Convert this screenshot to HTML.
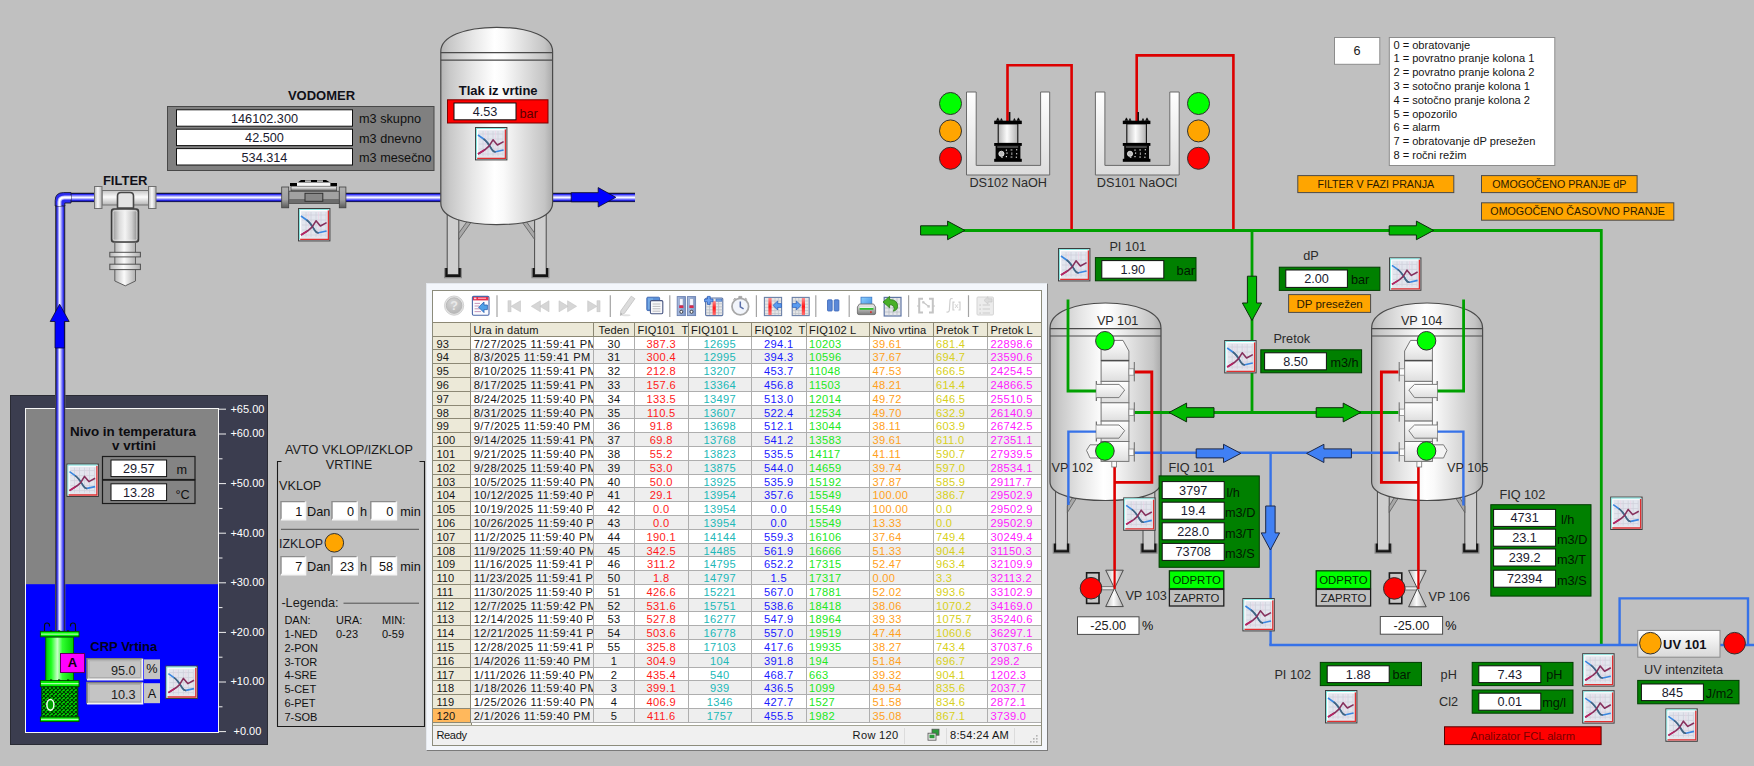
<!DOCTYPE html>
<html><head><meta charset="utf-8"><title>SCADA</title>
<style>
html,body{margin:0;padding:0;}
body{width:1754px;height:766px;overflow:hidden;background:#c0c0c0;position:relative;font-family:"Liberation Sans",sans-serif;}
svg#main{position:absolute;left:0;top:0;}
svg text{font-family:"Liberation Sans",sans-serif;}
#win{position:absolute;left:426px;top:283px;width:622px;height:468px;background:#f3f6fb;box-sizing:border-box;border-right:1px solid #7a7a7a;border-bottom:1px solid #7a7a7a;border-left:1px solid #e4e8ee;border-top:1px solid #e4e8ee;}
#inner{position:absolute;left:5px;top:6px;width:608px;height:454px;background:#fff;border:1px solid #8c8c7c;box-sizing:content-box;overflow:hidden;}
#tb{position:absolute;left:0;top:0;width:609px;height:30.4px;background:#fff;}
.grid{position:absolute;left:0;top:30.8px;width:609px;height:403px;background:#fff;font-size:11.1px;overflow:hidden;border-top:1px solid #8c8874;}
.cl{position:absolute;box-sizing:border-box;border-right:1px solid #aeaeae;border-bottom:1px solid #aeaeae;white-space:nowrap;overflow:hidden;line-height:14.4px;padding:0 2px 0 3px;color:#161616;background:#fff;letter-spacing:0.3px;}
.hd{background:#ece9d8;border-color:#8c8874;color:#161616;letter-spacing:0.12px;line-height:14.4px;padding-left:2.6px;}
.hd i{display:inline-block;width:3px;}
.hc{text-align:center;padding:0;}
.rn{background:#ece9d8;border-color:#8c8874;letter-spacing:0.1px;padding-left:3.4px;}
.alt{background:#eeeeee;}
.dt{padding-left:2.7px;letter-spacing:0.43px;}
.c{text-align:center;padding:0;}
.l{text-align:left;padding-left:2.5px;}
.k{color:#161616;} .r{color:#ff1a1a;} .cy{color:#20b8b8;} .b{color:#1a1aff;} .g{color:#20e820;} .o{color:#ffa020;} .y{color:#d8d020;} .m{color:#ff20ff;}
.sel{background:#ffb85c;}
#sb{position:absolute;left:0;top:434px;width:609px;height:20px;background:#f0f0f0;border-top:1px solid #a4a494;font-size:11.1px;color:#161616;letter-spacing:0.3px;}
#sb span{position:absolute;top:1.8px;white-space:nowrap;line-height:14.9px;}
</style></head><body>
<svg id="main" width="1754" height="766" viewBox="0 0 1754 766">
<defs>
<linearGradient id="pipeH" x1="0" y1="0" x2="0" y2="1">
 <stop offset="0" stop-color="#6a6a6a"/><stop offset="0.07" stop-color="#101010"/><stop offset="0.13" stop-color="#141480"/><stop offset="0.2" stop-color="#3030f4"/>
 <stop offset="0.34" stop-color="#9c9cff"/><stop offset="0.5" stop-color="#f6f6ff"/><stop offset="0.64" stop-color="#a0a0ff"/><stop offset="0.77" stop-color="#3434ff"/>
 <stop offset="0.87" stop-color="#000078"/><stop offset="0.93" stop-color="#2c2c40"/><stop offset="1" stop-color="#a0a0a0"/>
</linearGradient>
<linearGradient id="pipeV" x1="0" y1="0" x2="1" y2="0">
 <stop offset="0" stop-color="#707070"/><stop offset="0.07" stop-color="#303030"/><stop offset="0.13" stop-color="#202098"/><stop offset="0.21" stop-color="#3434dc"/>
 <stop offset="0.32" stop-color="#9494ff"/><stop offset="0.45" stop-color="#fcfcff"/><stop offset="0.58" stop-color="#b0b0ff"/><stop offset="0.71" stop-color="#6464ff"/>
 <stop offset="0.81" stop-color="#3232e4"/><stop offset="0.88" stop-color="#2020a0"/><stop offset="0.93" stop-color="#2c2c2c"/><stop offset="1" stop-color="#6a6a6a"/>
</linearGradient>
<linearGradient id="tankG" x1="0" y1="0" x2="1" y2="0">
 <stop offset="0" stop-color="#b4b4b4"/><stop offset="0.08" stop-color="#c8c8c8"/><stop offset="0.28" stop-color="#e6e6e6"/>
 <stop offset="0.48" stop-color="#ffffff"/><stop offset="0.56" stop-color="#fafafa"/><stop offset="0.75" stop-color="#dedede"/><stop offset="0.93" stop-color="#c4c4c4"/><stop offset="1" stop-color="#aaaaaa"/>
</linearGradient>
<linearGradient id="metalH" x1="0" y1="0" x2="1" y2="0">
 <stop offset="0" stop-color="#b8b8b8"/><stop offset="0.45" stop-color="#fbfbfb"/><stop offset="1" stop-color="#b0b0b0"/>
</linearGradient>
<linearGradient id="filtG" x1="0" y1="0" x2="1" y2="0"><stop offset="0" stop-color="#8e8e8e"/><stop offset="0.3" stop-color="#dcdcdc"/><stop offset="0.5" stop-color="#f4f4f4"/><stop offset="0.75" stop-color="#cfcfcf"/><stop offset="1" stop-color="#808080"/></linearGradient>
<linearGradient id="metalV" x1="0" y1="0" x2="0" y2="1">
 <stop offset="0" stop-color="#c4c4c4"/><stop offset="0.45" stop-color="#fbfbfb"/><stop offset="1" stop-color="#b4b4b4"/>
</linearGradient>
<linearGradient id="segV" x1="0" y1="0" x2="0" y2="1">
 <stop offset="0" stop-color="#ffffff"/><stop offset="1" stop-color="#dedede"/>
</linearGradient>
<linearGradient id="uWall" x1="0" y1="0" x2="0" y2="1">
 <stop offset="0" stop-color="#ffffff"/><stop offset="1" stop-color="#dcdcdc"/>
</linearGradient>
<linearGradient id="pumpG" x1="0" y1="0" x2="1" y2="0">
 <stop offset="0" stop-color="#00c800"/><stop offset="0.2" stop-color="#20ff20"/><stop offset="0.42" stop-color="#c8ffc8"/>
 <stop offset="0.6" stop-color="#30ff30"/><stop offset="1" stop-color="#00d000"/>
</linearGradient>
<linearGradient id="uvG" x1="0" y1="0" x2="0" y2="1">
 <stop offset="0" stop-color="#ffffff"/><stop offset="1" stop-color="#d8d8d8"/>
</linearGradient>
<pattern id="mesh" width="4" height="4" patternUnits="userSpaceOnUse">
 <rect width="4" height="4" fill="#00d800"/><path d="M0,0 L4,4 M4,0 L0,4" stroke="#003000" stroke-width="1.05"/>
</pattern>
<symbol id="chart" width="33" height="34" viewBox="0 0 33 34" overflow="visible">
 <rect x="0.5" y="0.5" width="31.4" height="32.4" fill="#e3e6ee" stroke="#3c3c3c" stroke-width="1"/>
 <path d="M1.5,31.6 V1.5 H30.6" fill="none" stroke="#86e8e2" stroke-width="1.1"/>
 <path d="M2.6,30.6 V2.6 H29.6" fill="none" stroke="#ffffff" stroke-width="1.1"/>
 <g stroke="#cfd0dc" stroke-width="0.8"><path d="M4,7 H28 M4,12 H28 M4,17 H28 M4,22 H28 M4,27 H28 M8,4 V29 M13,4 V29 M18,4 V29 M23,4 V29 M28,4 V29"/></g>
 <g stroke="#f0d0e4" stroke-width="0.7" opacity="0.8"><path d="M10.5,4 V29 M20.5,4 V29"/></g>
 <path d="M30.4,2.4 V31.4 H2.2" fill="none" stroke="#e03030" stroke-width="1.3"/>
 <path d="M3,8 L8.6,12 C12.4,14.6 14.4,18.4 17,22.6 C18,24.4 19,25 20.6,24.8 L28.6,23" fill="none" stroke="#3a86e0" stroke-width="1.6" stroke-linejoin="round"/>
 <path d="M8.6,12 C12.4,14.6 14.4,18.4 17,22.6 C18,24.4 19,25 20.6,24.8" fill="none" stroke="#46647a" stroke-width="1.6"/>
 <path d="M3,27 L10.6,22.2 L14,19.2 L18,12.8 L22.4,18 L28.6,14.6" fill="none" stroke="#86305c" stroke-width="1.6" stroke-linejoin="round"/>
 <path d="M3,27 L9,23.2" fill="none" stroke="#b82464" stroke-width="1.6"/>
</symbol>
</defs>
<rect x="55" y="205" width="10.4" height="426" fill="url(#pipeV)"/>
<rect x="70" y="192.5" width="565" height="10" fill="url(#pipeH)"/>
<path d="M55.2,206 V200.5 Q55.2,192.6 63.5,192.6 H71 V203 H64.8 V206 Z" fill="#2c2cf0" stroke="#1a1a30" stroke-width="0.9"/>
<path d="M59.4,206 V202 Q59.4,197.5 64.5,197.5 H71" fill="none" stroke="#b4b4ff" stroke-width="4"/>
<path d="M59.4,206 V202 Q59.4,197.5 64.5,197.5 H71" fill="none" stroke="#ffffff" stroke-width="1.8"/>
<path d="M59.6,304.2 L69.2,321.5 L64.4,321.5 L64.4,348 L55,348 L55,321.5 L50.2,321.5 Z" fill="#0000ff" stroke="#0a0a28" stroke-width="0.8"/>
<path d="M571.2,192.7 L598.2,192.7 L598.2,187.6 L615.8,197.3 L598.2,207 L598.2,201.8 L571.2,201.8 Z" fill="#0000ff" stroke="#0a0a28" stroke-width="0.8"/>
<rect x="102" y="190.5" width="46.5" height="14.5" fill="url(#metalV)" stroke="#707070" stroke-width="1"/>
<rect x="94.5" y="186.5" width="7.5" height="22" fill="url(#metalH)" stroke="#707070" stroke-width="1"/>
<rect x="148.5" y="186.5" width="7.5" height="22" fill="url(#metalH)" stroke="#707070" stroke-width="1"/>
<path d="M117.5,208 L117.5,196 Q117.5,192.5 121,192.5 L130,192.5 Q133.5,192.5 133.5,196 L133.5,208 Z" fill="#e4e4e4" stroke="#484848" stroke-width="1.6"/>
<rect x="111.5" y="209" width="27" height="33" rx="2.5" fill="url(#filtG)" stroke="#3c3c3c" stroke-width="1.5"/>
<rect x="113.2" y="210.8" width="23.6" height="29.4" rx="1.6" fill="none" stroke="#f0f0f0" stroke-width="0.8" opacity="0.8"/>
<path d="M114.8,242.5 L135.5,242.5 L135.5,281 L125.3,285.8 L114.8,281 Z" fill="url(#metalH)" stroke="#606060" stroke-width="1"/>
<rect x="109.8" y="252.3" width="30.6" height="4.6" fill="url(#metalH)" stroke="#505050" stroke-width="1"/>
<rect x="109.8" y="264.2" width="30.6" height="5.4" fill="url(#metalH)" stroke="#505050" stroke-width="1"/>
<text x="125.2" y="184.8" font-size="13" font-weight="bold" fill="#101018" text-anchor="middle" >FILTER</text>
<text x="321.5" y="100.4" font-size="13" font-weight="bold" fill="#101018" text-anchor="middle" >VODOMER</text>
<rect x="167.5" y="106.5" width="266.5" height="64" fill="#808080" stroke="#484848" stroke-width="1"/>
<rect x="176.5" y="109.8" width="176" height="16.4" fill="#fff" stroke="#101010" stroke-width="1"/>
<text x="264.5" y="122.8" font-size="12.7" font-weight="normal" fill="#1a1a2e" text-anchor="middle" >146102.300</text>
<text x="359" y="123.39999999999999" font-size="12.7" font-weight="normal" fill="#101010" text-anchor="start" >m3 skupno</text>
<rect x="176.5" y="129.2" width="176" height="16.4" fill="#fff" stroke="#101010" stroke-width="1"/>
<text x="264.5" y="142.2" font-size="12.7" font-weight="normal" fill="#1a1a2e" text-anchor="middle" >42.500</text>
<text x="359" y="142.79999999999998" font-size="12.7" font-weight="normal" fill="#101010" text-anchor="start" >m3 dnevno</text>
<rect x="176.5" y="148.6" width="176" height="16.4" fill="#fff" stroke="#101010" stroke-width="1"/>
<text x="264.5" y="161.6" font-size="12.7" font-weight="normal" fill="#1a1a2e" text-anchor="middle" >534.314</text>
<text x="359" y="162.2" font-size="12.7" font-weight="normal" fill="#101010" text-anchor="start" >m3 mesečno</text>
<path d="M290,186 L290,183 L297,183 L301,180 L326,180 L331,183 L337,183 L337,186 Z" fill="#000"/>
<rect x="297" y="182.4" width="33.4" height="3.8" fill="#f6f6f6"/>
<rect x="305" y="180.4" width="6" height="1.4" fill="#ddd"/><rect x="317" y="180.4" width="6" height="1.4" fill="#ddd"/>
<linearGradient id="fmTop" x1="0" y1="0" x2="0" y2="1"><stop offset="0" stop-color="#fff"/><stop offset="0.5" stop-color="#bbb"/><stop offset="1" stop-color="#3a3a3a"/></linearGradient>
<rect x="291" y="186.2" width="45.6" height="5.2" fill="url(#fmTop)" stroke="#303030" stroke-width="0.6"/>
<rect x="288.8" y="191.2" width="50.5" height="12.4" fill="#a2a2a2" stroke="#404040" stroke-width="0.8"/>
<rect x="288.8" y="199" width="50.5" height="4.2" fill="#6c6c6c"/>
<rect x="305" y="193.3" width="17.8" height="8" fill="#888" stroke="#303030" stroke-width="1"/>
<linearGradient id="fmFl" x1="0" y1="0" x2="0" y2="1"><stop offset="0" stop-color="#b0b0b0"/><stop offset="0.6" stop-color="#a0a0a0"/><stop offset="1" stop-color="#5a5a5a"/></linearGradient>
<rect x="281.7" y="187" width="7" height="20.8" fill="url(#fmFl)" stroke="#404040" stroke-width="0.8"/>
<rect x="339.3" y="187" width="6.6" height="20.8" fill="url(#fmFl)" stroke="#404040" stroke-width="0.8"/>
<use href="#chart" x="298" y="208"/>
<rect x="447.2" y="199" width="11.6" height="75.60000000000002" fill="#cecece" stroke="#4a4a4a" stroke-width="1"/>
<path d="M444.6,268 V277.6 H461.40000000000003 V268" fill="none" stroke="#8a8a8a" stroke-width="1.2"/>
<path d="M446.3,268 V275.8 H459.70000000000005 V268" fill="none" stroke="#141414" stroke-width="2.2"/>
<rect x="534.6" y="199" width="11.6" height="75.60000000000002" fill="#cecece" stroke="#4a4a4a" stroke-width="1"/>
<path d="M532.0,268 V277.6 H548.8 V268" fill="none" stroke="#8a8a8a" stroke-width="1.2"/>
<path d="M533.7,268 V275.8 H547.0999999999999 V268" fill="none" stroke="#141414" stroke-width="2.2"/>
<path d="M458.8,233 L467.8,220.5 L471.3,222 L458.8,239.5 Z" fill="#a8a8a8" stroke="#5a5a5a" stroke-width="0.8"/>
<path d="M534.6,233 L525.6,220.5 L522.1,222 L534.6,239.5 Z" fill="#a8a8a8" stroke="#5a5a5a" stroke-width="0.8"/>
<path d="M440.8,51.5 C440.8,36.496 464.278,27.3 496.70000000000005,27.3 C529.1220000000001,27.3 552.6,36.496 552.6,51.5 L552.6,203 C552.6,218.12 527.445,224.6 496.70000000000005,224.6 C465.95500000000004,224.6 440.8,218.12 440.8,203 Z" fill="url(#tankG)" stroke="#4a4a4a" stroke-width="1.2"/>
<path d="M440.8,52.6 H552.6 M440.8,60.2 H552.6" stroke="#4a4a4a" stroke-width="1.2"/>
<text x="498.2" y="94.6" font-size="13" font-weight="bold" fill="#101018" text-anchor="middle" >Tlak iz vrtine</text>
<rect x="447.5" y="99.8" width="100.5" height="23.2" fill="#ff0000" stroke="#7a0000" stroke-width="1"/>
<rect x="454" y="103" width="62" height="16.8" fill="#fff" stroke="#101010" stroke-width="1"/>
<text x="485.0" y="116.2" font-size="12.7" font-weight="normal" fill="#1a1a2e" text-anchor="middle" >4.53</text>
<text x="519.5" y="117.5" font-size="12.7" font-weight="normal" fill="#5a0000" text-anchor="start" >bar</text>
<use href="#chart" x="475" y="127"/>
<rect x="10.5" y="395.5" width="257" height="349" fill="#3b3d4f" stroke="#2a2b34" stroke-width="1"/>
<rect x="26" y="409" width="192" height="323.5" fill="#848484"/>
<rect x="26" y="584.2" width="192" height="148.3" fill="#0000ff"/>
<rect x="25.5" y="408.5" width="193" height="324" fill="none" stroke="#f6f6f6" stroke-width="1"/>
<rect x="55" y="380" width="10.4" height="251" fill="url(#pipeV)"/>
<path d="M219,409.2 H226" stroke="#f0f0f0" stroke-width="1"/>
<text x="247.4" y="412.59999999999997" font-size="11" font-weight="normal" fill="#ffffff" text-anchor="middle" >+65.00</text>
<path d="M219,434.0 H226" stroke="#f0f0f0" stroke-width="1"/>
<text x="247.4" y="437.4" font-size="11" font-weight="normal" fill="#ffffff" text-anchor="middle" >+60.00</text>
<path d="M219,458.8 H222.5" stroke="#f0f0f0" stroke-width="1"/>
<path d="M219,483.6 H226" stroke="#f0f0f0" stroke-width="1"/>
<text x="247.4" y="486.99999999999994" font-size="11" font-weight="normal" fill="#ffffff" text-anchor="middle" >+50.00</text>
<path d="M219,508.4 H222.5" stroke="#f0f0f0" stroke-width="1"/>
<path d="M219,533.2 H226" stroke="#f0f0f0" stroke-width="1"/>
<text x="247.4" y="536.6" font-size="11" font-weight="normal" fill="#ffffff" text-anchor="middle" >+40.00</text>
<path d="M219,558.0 H222.5" stroke="#f0f0f0" stroke-width="1"/>
<path d="M219,582.8 H226" stroke="#f0f0f0" stroke-width="1"/>
<text x="247.4" y="586.2" font-size="11" font-weight="normal" fill="#ffffff" text-anchor="middle" >+30.00</text>
<path d="M219,607.6 H222.5" stroke="#f0f0f0" stroke-width="1"/>
<path d="M219,632.4 H226" stroke="#f0f0f0" stroke-width="1"/>
<text x="247.4" y="635.8000000000001" font-size="11" font-weight="normal" fill="#ffffff" text-anchor="middle" >+20.00</text>
<path d="M219,657.2 H222.5" stroke="#f0f0f0" stroke-width="1"/>
<path d="M219,682.0 H226" stroke="#f0f0f0" stroke-width="1"/>
<text x="247.4" y="685.4" font-size="11" font-weight="normal" fill="#ffffff" text-anchor="middle" >+10.00</text>
<path d="M219,706.8 H222.5" stroke="#f0f0f0" stroke-width="1"/>
<path d="M219,731.6 H226" stroke="#f0f0f0" stroke-width="1"/>
<text x="247.4" y="735.0" font-size="11" font-weight="normal" fill="#ffffff" text-anchor="middle" >+0.00</text>
<text x="133" y="435.8" font-size="13.4" font-weight="bold" fill="#0c0c10" text-anchor="middle" >Nivo in temperatura</text>
<text x="134" y="450.2" font-size="13.4" font-weight="bold" fill="#0c0c10" text-anchor="middle" >v vrtini</text>
<use href="#chart" x="66.5" y="463.6"/>
<rect x="102.5" y="456.5" width="92.5" height="23" fill="#848484" stroke="#1c1c1c" stroke-width="1.2"/>
<rect x="102.5" y="480.2" width="92.5" height="23.3" fill="#848484" stroke="#1c1c1c" stroke-width="1.2"/>
<rect x="111" y="460" width="55.6" height="16.6" fill="#fff" stroke="#101010" stroke-width="1"/>
<text x="138.8" y="473.2" font-size="12.7" font-weight="normal" fill="#1a1a2e" text-anchor="middle" >29.57</text>
<rect x="111" y="483.8" width="55.6" height="16.8" fill="#fff" stroke="#101010" stroke-width="1"/>
<text x="138.8" y="497" font-size="12.7" font-weight="normal" fill="#1a1a2e" text-anchor="middle" >13.28</text>
<text x="176.5" y="474.4" font-size="12.7" font-weight="normal" fill="#101010" text-anchor="start" >m</text>
<text x="175.5" y="498.5" font-size="12.7" font-weight="normal" fill="#101010" text-anchor="start" >°C</text>
<path d="M44.5,631 L44.5,626 Q44.5,622.5 47.5,623 Q50,623.5 49.5,626.5 M70.5,626.5 Q70,623.5 72.5,623 Q75.5,622.5 75.5,626 L75.5,631" fill="none" stroke="#0a140a" stroke-width="1.1"/>
<rect x="45.7" y="637" width="27.8" height="43.5" fill="url(#pumpG)" stroke="#006000" stroke-width="1"/>
<rect x="40.4" y="631.4" width="38.6" height="5.4" fill="#00f000" stroke="#005000" stroke-width="1"/>
<path d="M41,634.1 H78.5" stroke="#a8ffa8" stroke-width="1.2"/>
<rect x="41.8" y="686.5" width="36" height="30.5" fill="url(#mesh)" stroke="#004000" stroke-width="1"/>
<rect x="40.4" y="680.6" width="38.6" height="6" fill="#00f000" stroke="#005000" stroke-width="1"/>
<path d="M41,683.6 H78.5" stroke="#a8ffa8" stroke-width="1.2"/>
<rect x="40.4" y="717" width="38.6" height="4.6" fill="#00f000" stroke="#005000" stroke-width="1"/>
<path d="M41,719.3 H78.5" stroke="#a8ffa8" stroke-width="1.2"/>
<ellipse cx="50.4" cy="704.8" rx="3.5" ry="5.4" fill="#00a000" stroke="#f0fff0" stroke-width="1.5"/>
<rect x="50" y="679.4" width="2.2" height="1.3" fill="#003000"/><rect x="50" y="630.3" width="2.2" height="1.3" fill="#003000"/>
<rect x="58" y="679.4" width="2.2" height="1.3" fill="#003000"/><rect x="58" y="630.3" width="2.2" height="1.3" fill="#003000"/>
<rect x="67" y="679.4" width="2.2" height="1.3" fill="#003000"/><rect x="67" y="630.3" width="2.2" height="1.3" fill="#003000"/>
<rect x="60.5" y="653.5" width="24" height="19" fill="#ff00ff" stroke="#5a005a" stroke-width="1"/>
<text x="72.5" y="666.6" font-size="13" font-weight="bold" fill="#100010" text-anchor="middle" >A</text>
<text x="123.8" y="650.6" font-size="13" font-weight="bold" fill="#000020" text-anchor="middle" >CRP Vrtina</text>
<rect x="87" y="658.8" width="55.5" height="20.8" fill="#c4c4c4"/>
<path d="M87,679.5999999999999 V658.8 H142.5" fill="none" stroke="#7c7c7c" stroke-width="1.6"/>
<path d="M142.5,658.8 V679.5999999999999 H87" fill="none" stroke="#f4f4f4" stroke-width="1.6"/>
<rect x="89" y="660.8" width="51.5" height="16.8" fill="none" stroke="#a8a8a8" stroke-width="0.8"/>
<rect x="87" y="682.6" width="55.5" height="21.2" fill="#c4c4c4"/>
<path d="M87,703.8000000000001 V682.6 H142.5" fill="none" stroke="#7c7c7c" stroke-width="1.6"/>
<path d="M142.5,682.6 V703.8000000000001 H87" fill="none" stroke="#f4f4f4" stroke-width="1.6"/>
<rect x="89" y="684.6" width="51.5" height="17.2" fill="none" stroke="#a8a8a8" stroke-width="0.8"/>
<text x="135.6" y="674.6" font-size="12.7" font-weight="normal" fill="#202020" text-anchor="end" >95.0</text>
<text x="135.6" y="698.6" font-size="12.7" font-weight="normal" fill="#202020" text-anchor="end" >10.3</text>
<rect x="144" y="659.4" width="16" height="19.8" fill="#c4c4c4"/>
<rect x="144" y="683.2" width="16" height="20" fill="#c4c4c4"/>
<text x="152" y="673.4" font-size="12.7" font-weight="normal" fill="#101010" text-anchor="middle" >%</text>
<text x="152" y="697.8" font-size="12.7" font-weight="normal" fill="#101010" text-anchor="middle" >A</text>
<use href="#chart" x="165.4" y="665.6"/>
<path d="M281.5,461.5 H277.5 V726.5 H424.5 V461.5 H419.5" fill="none" stroke="#1a1a1a" stroke-width="1.1"/>
<text x="349" y="454.4" font-size="12.7" font-weight="normal" fill="#1c1c1c" text-anchor="middle" >AVTO VKLOP/IZKLOP</text>
<text x="349" y="469" font-size="12.7" font-weight="normal" fill="#1c1c1c" text-anchor="middle" >VRTINE</text>
<text x="279" y="489.6" font-size="12.7" font-weight="normal" fill="#1c1c1c" text-anchor="start" >VKLOP</text>
<text x="279" y="548.2" font-size="12.4" font-weight="normal" fill="#1c1c2a" text-anchor="start" >IZKLOP</text>
<circle cx="334.3" cy="542.8" r="9.3" fill="#ffa500" stroke="#303030" stroke-width="1"/>
<path d="M281,529.3 H419" stroke="#505050" stroke-width="1"/>
<rect x="281" y="501.6" width="24.5" height="18" fill="#ffffff"/>
<path d="M281,519.6 V501.6 H305.5" fill="none" stroke="#8c8c8c" stroke-width="1.4"/>
<path d="M305.5,501.6 V519.6 H281" fill="none" stroke="#f6f6f6" stroke-width="1.6"/>
<text x="302.3" y="515.9" font-size="12.7" font-weight="normal" fill="#101010" text-anchor="end" >1</text>
<text x="307" y="515.6" font-size="12.7" font-weight="normal" fill="#101010" text-anchor="start" >Dan</text>
<rect x="332" y="501.6" width="25.2" height="18" fill="#ffffff"/>
<path d="M332,519.6 V501.6 H357.2" fill="none" stroke="#8c8c8c" stroke-width="1.4"/>
<path d="M357.2,501.6 V519.6 H332" fill="none" stroke="#f6f6f6" stroke-width="1.6"/>
<text x="354.0" y="515.9" font-size="12.7" font-weight="normal" fill="#101010" text-anchor="end" >0</text>
<text x="360" y="515.6" font-size="12.7" font-weight="normal" fill="#101010" text-anchor="start" >h</text>
<rect x="370.8" y="501.6" width="25.6" height="18" fill="#ffffff"/>
<path d="M370.8,519.6 V501.6 H396.40000000000003" fill="none" stroke="#8c8c8c" stroke-width="1.4"/>
<path d="M396.40000000000003,501.6 V519.6 H370.8" fill="none" stroke="#f6f6f6" stroke-width="1.6"/>
<text x="393.20000000000005" y="515.9" font-size="12.7" font-weight="normal" fill="#101010" text-anchor="end" >0</text>
<text x="400.3" y="515.6" font-size="12.7" font-weight="normal" fill="#101010" text-anchor="start" >min</text>
<rect x="281" y="556.6" width="24.5" height="18" fill="#ffffff"/>
<path d="M281,574.6 V556.6 H305.5" fill="none" stroke="#8c8c8c" stroke-width="1.4"/>
<path d="M305.5,556.6 V574.6 H281" fill="none" stroke="#f6f6f6" stroke-width="1.6"/>
<text x="302.3" y="570.9" font-size="12.7" font-weight="normal" fill="#101010" text-anchor="end" >7</text>
<text x="307" y="570.6" font-size="12.7" font-weight="normal" fill="#101010" text-anchor="start" >Dan</text>
<rect x="332" y="556.6" width="25.2" height="18" fill="#ffffff"/>
<path d="M332,574.6 V556.6 H357.2" fill="none" stroke="#8c8c8c" stroke-width="1.4"/>
<path d="M357.2,556.6 V574.6 H332" fill="none" stroke="#f6f6f6" stroke-width="1.6"/>
<text x="354.0" y="570.9" font-size="12.7" font-weight="normal" fill="#101010" text-anchor="end" >23</text>
<text x="360" y="570.6" font-size="12.7" font-weight="normal" fill="#101010" text-anchor="start" >h</text>
<rect x="370.8" y="556.6" width="25.6" height="18" fill="#ffffff"/>
<path d="M370.8,574.6 V556.6 H396.40000000000003" fill="none" stroke="#8c8c8c" stroke-width="1.4"/>
<path d="M396.40000000000003,556.6 V574.6 H370.8" fill="none" stroke="#f6f6f6" stroke-width="1.6"/>
<text x="393.20000000000005" y="570.9" font-size="12.7" font-weight="normal" fill="#101010" text-anchor="end" >58</text>
<text x="400.3" y="570.6" font-size="12.7" font-weight="normal" fill="#101010" text-anchor="start" >min</text>
<text x="281.4" y="606.8" font-size="12.7" font-weight="normal" fill="#1c1c1c" text-anchor="start" >-Legenda:</text>
<path d="M343.5,603.2 H419" stroke="#505050" stroke-width="1"/>
<text x="284.4" y="624" font-size="11" font-weight="normal" fill="#101010" text-anchor="start" >DAN:</text>
<text x="336" y="624" font-size="11" font-weight="normal" fill="#101010" text-anchor="start" >URA:</text>
<text x="382" y="624" font-size="11" font-weight="normal" fill="#101010" text-anchor="start" >MIN:</text>
<text x="336" y="638" font-size="11" font-weight="normal" fill="#101010" text-anchor="start" >0-23</text>
<text x="382" y="638" font-size="11" font-weight="normal" fill="#101010" text-anchor="start" >0-59</text>
<text x="284.4" y="638.0" font-size="11" font-weight="normal" fill="#101010" text-anchor="start" >1-NED</text>
<text x="284.4" y="651.78" font-size="11" font-weight="normal" fill="#101010" text-anchor="start" >2-PON</text>
<text x="284.4" y="665.56" font-size="11" font-weight="normal" fill="#101010" text-anchor="start" >3-TOR</text>
<text x="284.4" y="679.34" font-size="11" font-weight="normal" fill="#101010" text-anchor="start" >4-SRE</text>
<text x="284.4" y="693.12" font-size="11" font-weight="normal" fill="#101010" text-anchor="start" >5-CET</text>
<text x="284.4" y="706.9" font-size="11" font-weight="normal" fill="#101010" text-anchor="start" >6-PET</text>
<text x="284.4" y="720.68" font-size="11" font-weight="normal" fill="#101010" text-anchor="start" >7-SOB</text>
<path d="M1007.5,121 V65.2 H1071.6 V231" fill="none" stroke="#dd0000" stroke-width="2.6"/>
<path d="M1136.7,121 V55.4 H1233.4 V231" fill="none" stroke="#dd0000" stroke-width="2.6"/>
<path d="M966.5,92 H976.2 V165.4 H1040.6 V92 H1049.7 V175 H966.5 Z" fill="url(#uWall)" stroke="#6a6a6a" stroke-width="1"/>
<rect x="1008.8000000000001" y="112" width="1.6" height="9" fill="#111"/>
<rect x="998.2" y="123.8" width="19.6" height="19.6" fill="url(#metalH)" stroke="#111" stroke-width="1.1"/>
<rect x="994.2" y="120.7" width="27.6" height="3.4" fill="#000"/>
<path d="M996.2,120.8 l1.6,-3 l1.6,3 M1000.2,120.8 l1.2,-2.4 l1.2,2.4 M1013.2,120.8 l1.2,-2.4 l1.2,2.4 M1016.8000000000001,120.8 l1.6,-3 l1.6,3" fill="#000" stroke="#000" stroke-width="0.5"/>
<rect x="994.2" y="143" width="27.6" height="2.9" fill="#000"/>
<rect x="995.6" y="145.6" width="24.8" height="13.6" fill="#050505"/>
<rect x="994.2" y="158.8" width="27.6" height="3" fill="#000"/>
<circle cx="1001.4000000000001" cy="153.8" r="2.6" fill="#bbb" stroke="#fff" stroke-width="0.7"/>
<g fill="#e8e8e8"><rect x="997.2" y="146.6" width="21" height="0.8" opacity="0.7"/><rect x="1005.8000000000001" y="149.5" width="1.2" height="1.2"/><rect x="1006.4000000000001" y="152.5" width="1.2" height="1.2"/><rect x="1005.8000000000001" y="156" width="1.2" height="1.2"/><rect x="1010.6" y="149.5" width="1.8" height="0.9"/><rect x="1011.2" y="152.4" width="1.2" height="2.6" opacity="0.6"/><rect x="1010.6" y="156.6" width="1.8" height="0.9"/><rect x="1016.2" y="149" width="1" height="1.4"/><rect x="1016.2" y="153" width="1" height="1.4"/><rect x="1015.8000000000001" y="156.6" width="1" height="1.4"/><rect x="1001.2" y="156.8" width="1.6" height="0.9"/></g>
<text x="1008.2" y="187.2" font-size="12.7" font-weight="normal" fill="#2a2a2a" text-anchor="middle" >DS102 NaOH</text>
<circle cx="950.5" cy="103.5" r="11" fill="#00ff00" stroke="#303030" stroke-width="1"/>
<circle cx="950.5" cy="130.9" r="11" fill="#ffa500" stroke="#303030" stroke-width="1"/>
<circle cx="950.5" cy="158.3" r="11" fill="#ff0000" stroke="#303030" stroke-width="1"/>
<path d="M1095.4,92 H1104.9 V165.4 H1169.8 V92 H1179.2 V175 H1095.4 Z" fill="url(#uWall)" stroke="#6a6a6a" stroke-width="1"/>
<rect x="1137.3999999999999" y="112" width="1.6" height="9" fill="#111"/>
<rect x="1126.8" y="123.8" width="19.6" height="19.6" fill="url(#metalH)" stroke="#111" stroke-width="1.1"/>
<rect x="1122.8" y="120.7" width="27.6" height="3.4" fill="#000"/>
<path d="M1124.8,120.8 l1.6,-3 l1.6,3 M1128.8,120.8 l1.2,-2.4 l1.2,2.4 M1141.8,120.8 l1.2,-2.4 l1.2,2.4 M1145.3999999999999,120.8 l1.6,-3 l1.6,3" fill="#000" stroke="#000" stroke-width="0.5"/>
<rect x="1122.8" y="143" width="27.6" height="2.9" fill="#000"/>
<rect x="1124.2" y="145.6" width="24.8" height="13.6" fill="#050505"/>
<rect x="1122.8" y="158.8" width="27.6" height="3" fill="#000"/>
<circle cx="1130.0" cy="153.8" r="2.6" fill="#bbb" stroke="#fff" stroke-width="0.7"/>
<g fill="#e8e8e8"><rect x="1125.8" y="146.6" width="21" height="0.8" opacity="0.7"/><rect x="1134.3999999999999" y="149.5" width="1.2" height="1.2"/><rect x="1135.0" y="152.5" width="1.2" height="1.2"/><rect x="1134.3999999999999" y="156" width="1.2" height="1.2"/><rect x="1139.2" y="149.5" width="1.8" height="0.9"/><rect x="1139.8" y="152.4" width="1.2" height="2.6" opacity="0.6"/><rect x="1139.2" y="156.6" width="1.8" height="0.9"/><rect x="1144.8" y="149" width="1" height="1.4"/><rect x="1144.8" y="153" width="1" height="1.4"/><rect x="1144.3999999999999" y="156.6" width="1" height="1.4"/><rect x="1129.8" y="156.8" width="1.6" height="0.9"/></g>
<text x="1137" y="187.2" font-size="12.7" font-weight="normal" fill="#2a2a2a" text-anchor="middle" >DS101 NaOCl</text>
<circle cx="1198.5" cy="103.5" r="11" fill="#00ff00" stroke="#303030" stroke-width="1"/>
<circle cx="1198.5" cy="130.9" r="11" fill="#ffa500" stroke="#303030" stroke-width="1"/>
<circle cx="1198.5" cy="158.3" r="11" fill="#ff0000" stroke="#303030" stroke-width="1"/>
<rect x="1334.5" y="37.5" width="45.3" height="26.8" fill="#fff" stroke="#8c8c8c" stroke-width="1"/>
<text x="1357" y="55.2" font-size="12.7" font-weight="normal" fill="#202020" text-anchor="middle" >6</text>
<rect x="1389.3" y="37.5" width="165.5" height="128" fill="#fff" stroke="#8c8c8c" stroke-width="1"/>
<text x="1393.4" y="48.7" font-size="11.1" font-weight="normal" fill="#141414" text-anchor="start" >0 = obratovanje</text>
<text x="1393.4" y="62.47" font-size="11.1" font-weight="normal" fill="#141414" text-anchor="start" >1 = povratno pranje kolona 1</text>
<text x="1393.4" y="76.24000000000001" font-size="11.1" font-weight="normal" fill="#141414" text-anchor="start" >2 = povratno pranje kolona 2</text>
<text x="1393.4" y="90.01" font-size="11.1" font-weight="normal" fill="#141414" text-anchor="start" >3 = sotočno pranje kolona 1</text>
<text x="1393.4" y="103.78" font-size="11.1" font-weight="normal" fill="#141414" text-anchor="start" >4 = sotočno pranje kolona 2</text>
<text x="1393.4" y="117.55" font-size="11.1" font-weight="normal" fill="#141414" text-anchor="start" >5 = opozorilo</text>
<text x="1393.4" y="131.32" font-size="11.1" font-weight="normal" fill="#141414" text-anchor="start" >6 = alarm</text>
<text x="1393.4" y="145.09" font-size="11.1" font-weight="normal" fill="#141414" text-anchor="start" >7 = obratovanje dP presežen</text>
<text x="1393.4" y="158.86" font-size="11.1" font-weight="normal" fill="#141414" text-anchor="start" >8 = ročni režim</text>
<rect x="1297.8" y="175.6" width="156" height="17" fill="#ffa500" stroke="#4a4a4a" stroke-width="1"/>
<text x="1375.8" y="187.952" font-size="10.7" font-weight="normal" fill="#2a1a00" text-anchor="middle" >FILTER V FAZI PRANJA</text>
<rect x="1481.5" y="175.6" width="155.6" height="17" fill="#ffa500" stroke="#4a4a4a" stroke-width="1"/>
<text x="1559.3" y="187.952" font-size="10.7" font-weight="normal" fill="#2a1a00" text-anchor="middle" >OMOGOČENO PRANJE dP</text>
<rect x="1481.5" y="202.8" width="192.3" height="17.4" fill="#ffa500" stroke="#4a4a4a" stroke-width="1"/>
<text x="1577.65" y="215.352" font-size="10.7" font-weight="normal" fill="#2a1a00" text-anchor="middle" >OMOGOČENO ČASOVNO PRANJE</text>
<path d="M921,230.5 H1601.3 V645" fill="none" stroke="#00a000" stroke-width="2.8"/>
<path d="M1252,230.5 V412.5" fill="none" stroke="#00a000" stroke-width="2.8"/>
<path d="M920.6,225.8 L947.5999999999999,225.8 L947.5999999999999,221.1 L964.8,230.4 L947.5999999999999,239.70000000000002 L947.5999999999999,235.0 L920.6,235.0 Z" fill="#00b800" stroke="#0c2c0c" stroke-width="1"/>
<path d="M1389.2,225.8 L1416.3999999999999,225.8 L1416.3999999999999,221.1 L1433.6,230.4 L1416.3999999999999,239.70000000000002 L1416.3999999999999,235.0 L1389.2,235.0 Z" fill="#00b800" stroke="#0c2c0c" stroke-width="1"/>
<path d="M1247.4,276.2 L1256.6,276.2 L1256.6,303.0 L1261.6,303.0 L1252,320.5 L1242.4,303.0 L1247.4,303.0 Z" fill="#00b800" stroke="#0c2c0c" stroke-width="1"/>
<rect x="1055.6" y="478" width="11.8" height="72.10000000000002" fill="#cecece" stroke="#4a4a4a" stroke-width="1"/>
<path d="M1053.3,543.5 V553.1 H1069.7 V543.5" fill="none" stroke="#8a8a8a" stroke-width="1.2"/>
<path d="M1055.0,543.5 V551.3 H1068.0 V543.5" fill="none" stroke="#141414" stroke-width="2.2"/>
<rect x="1143" y="478" width="11.8" height="72.10000000000002" fill="#cecece" stroke="#4a4a4a" stroke-width="1"/>
<path d="M1140.7,543.5 V553.1 H1157.1000000000001 V543.5" fill="none" stroke="#8a8a8a" stroke-width="1.2"/>
<path d="M1142.4,543.5 V551.3 H1155.4 V543.5" fill="none" stroke="#141414" stroke-width="2.2"/>
<path d="M1067.3999999999999,506 L1074.8999999999999,493.5 L1078.3999999999999,495 L1067.3999999999999,512.5 Z" fill="#a8a8a8" stroke="#5a5a5a" stroke-width="0.8"/>
<path d="M1143,506 L1135.5,493.5 L1132.0,495 L1143,512.5 Z" fill="#a8a8a8" stroke="#5a5a5a" stroke-width="0.8"/>
<path d="M1050,328.2 C1050,312.576 1073.31,303 1105.5,303 C1137.69,303 1161,312.576 1161,328.2 L1161,482 C1161,494.95 1136.025,500.5 1105.5,500.5 C1074.975,500.5 1050,494.95 1050,482 Z" fill="url(#tankG)" stroke="#4a4a4a" stroke-width="1.2"/>
<path d="M1050,328.6 H1161 M1050,336 H1161" stroke="#4a4a4a" stroke-width="1.2"/>
<rect x="1377.4" y="478" width="11.8" height="72.10000000000002" fill="#cecece" stroke="#4a4a4a" stroke-width="1"/>
<path d="M1375.1000000000001,543.5 V553.1 H1391.5000000000002 V543.5" fill="none" stroke="#8a8a8a" stroke-width="1.2"/>
<path d="M1376.8000000000002,543.5 V551.3 H1389.8000000000002 V543.5" fill="none" stroke="#141414" stroke-width="2.2"/>
<rect x="1464.8" y="478" width="11.8" height="72.10000000000002" fill="#cecece" stroke="#4a4a4a" stroke-width="1"/>
<path d="M1462.5,543.5 V553.1 H1478.9 V543.5" fill="none" stroke="#8a8a8a" stroke-width="1.2"/>
<path d="M1464.2,543.5 V551.3 H1477.2 V543.5" fill="none" stroke="#141414" stroke-width="2.2"/>
<path d="M1389.2,506 L1396.7,493.5 L1400.2,495 L1389.2,512.5 Z" fill="#a8a8a8" stroke="#5a5a5a" stroke-width="0.8"/>
<path d="M1464.8,506 L1457.3,493.5 L1453.8,495 L1464.8,512.5 Z" fill="#a8a8a8" stroke="#5a5a5a" stroke-width="0.8"/>
<path d="M1371.6,328.2 C1371.6,312.576 1394.9099999999999,303 1427.1,303 C1459.29,303 1482.6,312.576 1482.6,328.2 L1482.6,482 C1482.6,494.95 1457.625,500.5 1427.1,500.5 C1396.5749999999998,500.5 1371.6,494.95 1371.6,482 Z" fill="url(#tankG)" stroke="#4a4a4a" stroke-width="1.2"/>
<path d="M1371.6,328.6 H1482.6 M1371.6,336 H1482.6" stroke="#4a4a4a" stroke-width="1.2"/>
<path d="M1068,299.4 V391 H1096.3" fill="none" stroke="#00a000" stroke-width="2.8"/>
<path d="M1096.3,431.6 H1068.4 V505" fill="none" stroke="#3672e8" stroke-width="2.4"/>
<path d="M1463.6,299.4 V391 H1436.4" fill="none" stroke="#00a000" stroke-width="2.8"/>
<path d="M1436.4,431.6 H1463.4 V505.6" fill="none" stroke="#3672e8" stroke-width="2.4"/>
<path d="M1134.3,412.5 H1398.4" fill="none" stroke="#00a000" stroke-width="2.8"/>
<path d="M1134.3,452.8 H1398.4" fill="none" stroke="#3672e8" stroke-width="2.4"/>
<path d="M1270.6,452.8 V645 " fill="none" stroke="#3672e8" stroke-width="2.4"/>
<path d="M1269.3,645 H1638 M1720,645 H1754" fill="none" stroke="#3672e8" stroke-width="2.4"/>
<path d="M1619.6,645 V598.4 H1748 V645" fill="none" stroke="#3672e8" stroke-width="2.4"/>
<path d="M1134.3,372 H1151.8 V482.4 H1114.4" fill="none" stroke="#dd0000" stroke-width="2.9"/>
<path d="M1114.6,467 V571" fill="none" stroke="#dd0000" stroke-width="2.6"/>
<path d="M1398.4,372 H1381.4 V482.4 H1418.4" fill="none" stroke="#dd0000" stroke-width="2.9"/>
<path d="M1418.4,467 V571" fill="none" stroke="#dd0000" stroke-width="2.6"/>
<path d="M1101.1,340.4 L1123.0,340.4 L1128.9,351 L1128.9,360.6 L1101.1,360.6 Z" fill="url(#segV)" stroke="#767676" stroke-width="1"/>
<rect x="1101.1" y="360.6" width="27.800000000000182" height="20.799999999999955" fill="url(#segV)" stroke="#767676" stroke-width="1"/>
<rect x="1101.1" y="381.4" width="27.800000000000182" height="21.400000000000034" fill="url(#segV)" stroke="#767676" stroke-width="1"/>
<rect x="1101.1" y="402.8" width="27.800000000000182" height="18.30000000000001" fill="url(#segV)" stroke="#767676" stroke-width="1"/>
<rect x="1101.1" y="421.1" width="27.800000000000182" height="20.399999999999977" fill="url(#segV)" stroke="#767676" stroke-width="1"/>
<rect x="1101.1" y="441.5" width="27.800000000000182" height="19.899999999999977" fill="url(#segV)" stroke="#767676" stroke-width="1"/>
<path d="M1101.1,360.6 H1128.9" stroke="#4c4c4c" stroke-width="1.5"/>
<rect x="1128.9" y="368.8" width="5" height="6.4" fill="#fcfcfc" stroke="#8a8a8a" stroke-width="0.8"/>
<path d="M1134.3,362 V381.4" stroke="#6c6c6c" stroke-width="1"/>
<rect x="1128.9" y="409.1" width="5" height="6.4" fill="#fcfcfc" stroke="#8a8a8a" stroke-width="0.8"/>
<path d="M1134.3,402.3 V421.7" stroke="#6c6c6c" stroke-width="1"/>
<rect x="1128.9" y="449.0" width="5" height="6.4" fill="#fcfcfc" stroke="#8a8a8a" stroke-width="0.8"/>
<path d="M1134.3,442.2 V461.59999999999997" stroke="#6c6c6c" stroke-width="1"/>
<path d="M1096.3,381 V401" stroke="#5c5c5c" stroke-width="1.1"/>
<path d="M1096.3,384.4 H1119.0 L1124.7,390 L1119.0,397.6 H1096.3" fill="url(#segV)" stroke="#7c7c7c" stroke-width="1"/>
<path d="M1096.3,421.6 V441.6" stroke="#5c5c5c" stroke-width="1.1"/>
<path d="M1096.3,425.0 H1119.0 L1124.7,430.6 L1119.0,438.20000000000005 H1096.3" fill="url(#segV)" stroke="#7c7c7c" stroke-width="1"/>
<rect x="1111.8" y="461.4" width="4.8" height="5.6" fill="#fcfcfc" stroke="#7a7a7a" stroke-width="0.8"/>
<path d="M1101.1,444.8 L1090.0,444.8 L1086.5,450.4 L1090.0,458 L1101.1,458" fill="#f4f4f4" stroke="#7c7c7c" stroke-width="1"/>
<circle cx="1104.9" cy="340.8" r="9.3" fill="#00ff00" stroke="#303030" stroke-width="1"/>
<circle cx="1104.9" cy="451" r="9.3" fill="#00ff00" stroke="#303030" stroke-width="1"/>
<path d="M1432.4,340.4 L1410.5,340.4 L1404.6,351 L1404.6,360.6 L1432.4,360.6 Z" fill="url(#segV)" stroke="#767676" stroke-width="1"/>
<rect x="1404.6" y="360.6" width="27.800000000000182" height="20.799999999999955" fill="url(#segV)" stroke="#767676" stroke-width="1"/>
<rect x="1404.6" y="381.4" width="27.800000000000182" height="21.400000000000034" fill="url(#segV)" stroke="#767676" stroke-width="1"/>
<rect x="1404.6" y="402.8" width="27.800000000000182" height="18.30000000000001" fill="url(#segV)" stroke="#767676" stroke-width="1"/>
<rect x="1404.6" y="421.1" width="27.800000000000182" height="20.399999999999977" fill="url(#segV)" stroke="#767676" stroke-width="1"/>
<rect x="1404.6" y="441.5" width="27.800000000000182" height="19.899999999999977" fill="url(#segV)" stroke="#767676" stroke-width="1"/>
<path d="M1404.6,360.6 H1432.4" stroke="#4c4c4c" stroke-width="1.5"/>
<rect x="1399.6" y="368.8" width="5" height="6.4" fill="#fcfcfc" stroke="#8a8a8a" stroke-width="0.8"/>
<path d="M1399.2,362 V381.4" stroke="#6c6c6c" stroke-width="1"/>
<rect x="1399.6" y="409.1" width="5" height="6.4" fill="#fcfcfc" stroke="#8a8a8a" stroke-width="0.8"/>
<path d="M1399.2,402.3 V421.7" stroke="#6c6c6c" stroke-width="1"/>
<rect x="1399.6" y="449.0" width="5" height="6.4" fill="#fcfcfc" stroke="#8a8a8a" stroke-width="0.8"/>
<path d="M1399.2,442.2 V461.59999999999997" stroke="#6c6c6c" stroke-width="1"/>
<path d="M1437.2,381 V401" stroke="#5c5c5c" stroke-width="1.1"/>
<path d="M1437.2,384.4 H1414.5 L1408.8,390 L1414.5,397.6 H1437.2" fill="url(#segV)" stroke="#7c7c7c" stroke-width="1"/>
<path d="M1437.2,421.6 V441.6" stroke="#5c5c5c" stroke-width="1.1"/>
<path d="M1437.2,425.0 H1414.5 L1408.8,430.6 L1414.5,438.20000000000005 H1437.2" fill="url(#segV)" stroke="#7c7c7c" stroke-width="1"/>
<rect x="1416.8999999999999" y="461.4" width="4.8" height="5.6" fill="#fcfcfc" stroke="#7a7a7a" stroke-width="0.8"/>
<path d="M1432.4,444.8 L1443.5,444.8 L1447,450.4 L1443.5,458 L1432.4,458" fill="#f4f4f4" stroke="#7c7c7c" stroke-width="1"/>
<circle cx="1426.5" cy="340.8" r="9.3" fill="#00ff00" stroke="#303030" stroke-width="1"/>
<circle cx="1426.5" cy="451" r="9.3" fill="#00ff00" stroke="#303030" stroke-width="1"/>
<path d="M1214,407.7 L1186.6,407.7 L1186.6,403.1 L1169,412.5 L1186.6,421.9 L1186.6,417.3 L1214,417.3 Z" fill="#00b800" stroke="#0c2c0c" stroke-width="1"/>
<path d="M1316.2,407.7 L1343.2,407.7 L1343.2,403.1 L1360.8,412.5 L1343.2,421.9 L1343.2,417.3 L1316.2,417.3 Z" fill="#00b800" stroke="#0c2c0c" stroke-width="1"/>
<path d="M1196.2,448.9 L1223.5,448.9 L1223.5,444.29999999999995 L1240.8,453.4 L1223.5,462.5 L1223.5,457.9 L1196.2,457.9 Z" fill="#4080f4" stroke="#1c2848" stroke-width="1"/>
<path d="M1351.4,448.9 L1323.8999999999999,448.9 L1323.8999999999999,444.29999999999995 L1306.6,453.4 L1323.8999999999999,462.5 L1323.8999999999999,457.9 L1351.4,457.9 Z" fill="#4080f4" stroke="#1c2848" stroke-width="1"/>
<path d="M1265.7,506 L1275.1000000000001,506 L1275.1000000000001,532.9 L1279.6000000000001,532.9 L1270.4,550 L1261.2,532.9 L1265.7,532.9 Z" fill="#4080f4" stroke="#1c2848" stroke-width="1"/>
<text x="1117.6" y="324.6" font-size="12.7" font-weight="normal" fill="#2a2a2a" text-anchor="middle" >VP 101</text>
<text x="1421.6" y="324.6" font-size="12.7" font-weight="normal" fill="#2a2a2a" text-anchor="middle" >VP 104</text>
<text x="1051.6" y="471.8" font-size="12.7" font-weight="normal" fill="#2a2a2a" text-anchor="start" >VP 102</text>
<text x="1447" y="471.8" font-size="12.7" font-weight="normal" fill="#2a2a2a" text-anchor="start" >VP 105</text>
<use href="#chart" x="1058" y="248"/>
<text x="1109.4" y="251.2" font-size="12.7" font-weight="normal" fill="#2a2a2a" text-anchor="start" >PI 101</text>
<rect x="1095.4" y="257.6" width="100.6" height="23.2" fill="#008000" stroke="#003c00" stroke-width="1"/>
<rect x="1101.8" y="260.6" width="62" height="17.6" fill="#fff" stroke="#101010" stroke-width="1"/>
<text x="1132.8" y="273.97200000000004" font-size="12.7" font-weight="normal" fill="#1a1a2e" text-anchor="middle" >1.90</text>
<text x="1176.6" y="274.6" font-size="12.7" font-weight="normal" fill="#001800" text-anchor="start" >bar</text>
<text x="1303.2" y="259.8" font-size="12.7" font-weight="normal" fill="#2a2a2a" text-anchor="start" >dP</text>
<rect x="1279.3" y="267.2" width="100.6" height="23.2" fill="#008000" stroke="#003c00" stroke-width="1"/>
<rect x="1285.8" y="270" width="61.6" height="17.4" fill="#fff" stroke="#101010" stroke-width="1"/>
<text x="1316.6" y="283.272" font-size="12.7" font-weight="normal" fill="#1a1a2e" text-anchor="middle" >2.00</text>
<text x="1351" y="283.9" font-size="12.7" font-weight="normal" fill="#001800" text-anchor="start" >bar</text>
<use href="#chart" x="1389" y="257.4"/>
<rect x="1288.6" y="294.6" width="82" height="17.8" fill="#ffa500" stroke="#4a4a4a" stroke-width="1"/>
<text x="1329.6" y="307.64" font-size="11.5" font-weight="normal" fill="#2a1a00" text-anchor="middle" >DP presežen</text>
<text x="1273.4" y="342.8" font-size="12.7" font-weight="normal" fill="#2a2a2a" text-anchor="start" >Pretok</text>
<use href="#chart" x="1224.2" y="340"/>
<rect x="1260.8" y="349.8" width="100.8" height="23" fill="#008000" stroke="#003c00" stroke-width="1"/>
<rect x="1264.6" y="352.8" width="61.8" height="17" fill="#fff" stroke="#101010" stroke-width="1"/>
<text x="1295.5" y="365.872" font-size="12.7" font-weight="normal" fill="#1a1a2e" text-anchor="middle" >8.50</text>
<text x="1330.4" y="366.5" font-size="12.7" font-weight="normal" fill="#001800" text-anchor="start" >m3/h</text>
<text x="1168.4" y="471.8" font-size="12.7" font-weight="normal" fill="#2a2a2a" text-anchor="start" >FIQ 101</text>
<rect x="1159.1" y="475.9" width="100.2" height="91.4" fill="#008000" stroke="#003c00" stroke-width="1"/>
<rect x="1162.2" y="481.6" width="62" height="17" fill="#fff" stroke="#101010" stroke-width="1"/>
<text x="1193.2" y="494.672" font-size="12.7" font-weight="normal" fill="#1a1a2e" text-anchor="middle" >3797</text>
<text x="1226.4" y="496.6" font-size="12.7" font-weight="normal" fill="#001800" text-anchor="start" >l/h</text>
<rect x="1162.2" y="502.2" width="62" height="17" fill="#fff" stroke="#101010" stroke-width="1"/>
<text x="1193.2" y="515.2719999999999" font-size="12.7" font-weight="normal" fill="#1a1a2e" text-anchor="middle" >19.4</text>
<text x="1225" y="517.2" font-size="12.7" font-weight="normal" fill="#001800" text-anchor="start" >m3/D</text>
<rect x="1162.2" y="522.8" width="62" height="17" fill="#fff" stroke="#101010" stroke-width="1"/>
<text x="1193.2" y="535.872" font-size="12.7" font-weight="normal" fill="#1a1a2e" text-anchor="middle" >228.0</text>
<text x="1225" y="537.8" font-size="12.7" font-weight="normal" fill="#001800" text-anchor="start" >m3/T</text>
<rect x="1162.2" y="543.4" width="62" height="17" fill="#fff" stroke="#101010" stroke-width="1"/>
<text x="1193.2" y="556.472" font-size="12.7" font-weight="normal" fill="#1a1a2e" text-anchor="middle" >73708</text>
<text x="1225" y="558.4" font-size="12.7" font-weight="normal" fill="#001800" text-anchor="start" >m3/S</text>
<text x="1499.4" y="499.4" font-size="12.7" font-weight="normal" fill="#2a2a2a" text-anchor="start" >FIQ 102</text>
<rect x="1490.8" y="504.7" width="100.2" height="91.4" fill="#008000" stroke="#003c00" stroke-width="1"/>
<rect x="1493.6" y="509.4" width="62" height="17" fill="#fff" stroke="#101010" stroke-width="1"/>
<text x="1524.6" y="522.472" font-size="12.7" font-weight="normal" fill="#1a1a2e" text-anchor="middle" >4731</text>
<text x="1561" y="524.4" font-size="12.7" font-weight="normal" fill="#001800" text-anchor="start" >l/h</text>
<rect x="1493.6" y="529.2" width="62" height="17" fill="#fff" stroke="#101010" stroke-width="1"/>
<text x="1524.6" y="542.272" font-size="12.7" font-weight="normal" fill="#1a1a2e" text-anchor="middle" >23.1</text>
<text x="1557" y="544.2" font-size="12.7" font-weight="normal" fill="#001800" text-anchor="start" >m3/D</text>
<rect x="1493.6" y="549" width="62" height="17" fill="#fff" stroke="#101010" stroke-width="1"/>
<text x="1524.6" y="562.072" font-size="12.7" font-weight="normal" fill="#1a1a2e" text-anchor="middle" >239.2</text>
<text x="1557" y="564" font-size="12.7" font-weight="normal" fill="#001800" text-anchor="start" >m3/T</text>
<rect x="1493.6" y="570.2" width="62" height="17" fill="#fff" stroke="#101010" stroke-width="1"/>
<text x="1524.6" y="583.272" font-size="12.7" font-weight="normal" fill="#1a1a2e" text-anchor="middle" >72394</text>
<text x="1557" y="585.2" font-size="12.7" font-weight="normal" fill="#001800" text-anchor="start" >m3/S</text>
<use href="#chart" x="1123.2" y="497.4"/>
<use href="#chart" x="1242.4" y="598"/>
<use href="#chart" x="1610.2" y="496.6"/>
<rect x="1086.6" y="572.8000000000001" width="12.4" height="30.6" fill="#c8c8c8" stroke="#1a1a1a" stroke-width="1.6"/>
<path d="M1091,588.2 H1114.5" stroke="#e8e8e8" stroke-width="3"/><path d="M1091,586.6 H1114.5 M1091,589.8000000000001 H1114.5" stroke="#555" stroke-width="0.7"/>
<path d="M1105.7,570.2 H1123.3 L1114.5,588.2 Z M1105.7,606.6 H1123.3 L1114.5,588.2 Z" fill="url(#metalH)" stroke="#4a4a4a" stroke-width="1"/>
<circle cx="1091" cy="588.2" r="10.8" fill="#ff0000" stroke="#303030" stroke-width="1"/>
<rect x="1389.4" y="573.0" width="12.4" height="30.6" fill="#c8c8c8" stroke="#1a1a1a" stroke-width="1.6"/>
<path d="M1394.3,588.4 H1417.4" stroke="#e8e8e8" stroke-width="3"/><path d="M1394.3,586.8 H1417.4 M1394.3,590.0 H1417.4" stroke="#555" stroke-width="0.7"/>
<path d="M1408.6000000000001,570.4 H1426.2 L1417.4,588.4 Z M1408.6000000000001,606.8 H1426.2 L1417.4,588.4 Z" fill="url(#metalH)" stroke="#4a4a4a" stroke-width="1"/>
<circle cx="1394.3" cy="588.4" r="10.8" fill="#ff0000" stroke="#303030" stroke-width="1"/>
<path d="M1114.6,570 V589" fill="none" stroke="#dd0000" stroke-width="2.2"/>
<path d="M1418.4,570 V589" fill="none" stroke="#dd0000" stroke-width="2.2"/>
<text x="1125.4" y="600.2" font-size="12.7" font-weight="normal" fill="#2a2a2a" text-anchor="start" >VP 103</text>
<text x="1428.6" y="600.8" font-size="12.7" font-weight="normal" fill="#2a2a2a" text-anchor="start" >VP 106</text>
<rect x="1169.4" y="570.8" width="54.4" height="17.8" fill="#00ff00" stroke="#0a3a0a" stroke-width="1.3"/>
<text x="1196.6000000000001" y="584" font-size="11.4" font-weight="normal" fill="#003000" text-anchor="middle" >ODPRTO</text>
<rect x="1169.4" y="589.4" width="54.4" height="16.6" fill="#c0c0c0" stroke="#1e1e1e" stroke-width="1.3"/>
<text x="1196.6000000000001" y="602" font-size="11.4" font-weight="normal" fill="#202020" text-anchor="middle" >ZAPRTO</text>
<rect x="1316.2" y="570.8" width="54.4" height="17.8" fill="#00ff00" stroke="#0a3a0a" stroke-width="1.3"/>
<text x="1343.4" y="584" font-size="11.4" font-weight="normal" fill="#003000" text-anchor="middle" >ODPRTO</text>
<rect x="1316.2" y="589.4" width="54.4" height="16.6" fill="#c0c0c0" stroke="#1e1e1e" stroke-width="1.3"/>
<text x="1343.4" y="602" font-size="11.4" font-weight="normal" fill="#202020" text-anchor="middle" >ZAPRTO</text>
<rect x="1077.5" y="616.8" width="61.5" height="17.6" fill="#fff" stroke="#4a4a4a" stroke-width="1"/>
<text x="1108.2" y="630.2" font-size="12.7" font-weight="normal" fill="#202020" text-anchor="middle" >-25.00</text>
<text x="1142" y="630.4" font-size="12.7" font-weight="normal" fill="#101010" text-anchor="start" >%</text>
<rect x="1380.3" y="616.5" width="62.3" height="17.7" fill="#fff" stroke="#4a4a4a" stroke-width="1"/>
<text x="1411.4" y="630" font-size="12.7" font-weight="normal" fill="#202020" text-anchor="middle" >-25.00</text>
<text x="1445.2" y="630.2" font-size="12.7" font-weight="normal" fill="#101010" text-anchor="start" >%</text>
<text x="1274.4" y="679.2" font-size="12.7" font-weight="normal" fill="#2a2a2a" text-anchor="start" >PI 102</text>
<rect x="1320.3" y="662.4" width="101.2" height="23.2" fill="#008000" stroke="#003c00" stroke-width="1"/>
<rect x="1327.2" y="665.8" width="62" height="16.8" fill="#fff" stroke="#101010" stroke-width="1"/>
<text x="1358.2" y="678.7719999999999" font-size="12.7" font-weight="normal" fill="#1a1a2e" text-anchor="middle" >1.88</text>
<text x="1392.4" y="679.4" font-size="12.7" font-weight="normal" fill="#001800" text-anchor="start" >bar</text>
<use href="#chart" x="1325" y="690"/>
<text x="1440.6" y="679" font-size="12.7" font-weight="normal" fill="#2a2a2a" text-anchor="start" >pH</text>
<rect x="1472.2" y="662.4" width="100.8" height="23.2" fill="#008000" stroke="#003c00" stroke-width="1"/>
<rect x="1478.8" y="665.8" width="62" height="16.8" fill="#fff" stroke="#101010" stroke-width="1"/>
<text x="1509.8" y="678.7719999999999" font-size="12.7" font-weight="normal" fill="#1a1a2e" text-anchor="middle" >7.43</text>
<text x="1546.2" y="679.4" font-size="12.7" font-weight="normal" fill="#001800" text-anchor="start" >pH</text>
<text x="1439" y="705.8" font-size="12.7" font-weight="normal" fill="#2a2a2a" text-anchor="start" >Cl2</text>
<rect x="1472.2" y="690" width="100.8" height="23.2" fill="#008000" stroke="#003c00" stroke-width="1"/>
<rect x="1478.8" y="693.2" width="62" height="17" fill="#fff" stroke="#101010" stroke-width="1"/>
<text x="1509.8" y="706.272" font-size="12.7" font-weight="normal" fill="#1a1a2e" text-anchor="middle" >0.01</text>
<text x="1542.2" y="706.9000000000001" font-size="12.7" font-weight="normal" fill="#001800" text-anchor="start" >mg/l</text>
<use href="#chart" x="1582.2" y="653.2"/>
<use href="#chart" x="1582.2" y="690.2"/>
<rect x="1444.5" y="726.8" width="156.6" height="17.8" fill="#ff0000" stroke="#5a0000" stroke-width="1"/>
<text x="1522.8" y="739.732" font-size="11.2" font-weight="normal" fill="#780000" text-anchor="middle" >Analizator FCL alarm</text>
<rect x="1637.8" y="630.4" width="82.2" height="26.8" fill="url(#uvG)" stroke="#8a8a8a" stroke-width="1"/>
<circle cx="1650.4" cy="643.2" r="10.8" fill="#ffa500" stroke="#303030" stroke-width="1"/>
<text x="1684.8" y="649.4" font-size="13" font-weight="bold" fill="#101018" text-anchor="middle" >UV 101</text>
<circle cx="1734.6" cy="643.2" r="10.8" fill="#ff0000" stroke="#303030" stroke-width="1"/>
<text x="1683.6" y="674" font-size="12.7" font-weight="normal" fill="#2a2a2a" text-anchor="middle" >UV intenziteta</text>
<rect x="1637.7" y="680.4" width="101.3" height="23.4" fill="#008000" stroke="#003c00" stroke-width="1"/>
<rect x="1641.4" y="684" width="62" height="16.6" fill="#fff" stroke="#101010" stroke-width="1"/>
<text x="1672.4" y="696.872" font-size="12.7" font-weight="normal" fill="#1a1a2e" text-anchor="middle" >845</text>
<text x="1705.8" y="697.5" font-size="12.7" font-weight="normal" fill="#001800" text-anchor="start" >J/m2</text>
<use href="#chart" x="1665.4" y="708.4"/>
</svg>
<div id="win"><div id="inner">
<div id="tb"><svg width="609" height="30" viewBox="433 291 609 30" style="position:absolute;left:0;top:0">
<defs>
<radialGradient id="hlp" cx="0.4" cy="0.3" r="0.8"><stop offset="0" stop-color="#d4d4d4"/><stop offset="1" stop-color="#b4b4b4"/></radialGradient>
<linearGradient id="bnd" x1="0" y1="0" x2="1" y2="0"><stop offset="0" stop-color="#a9bce0"/><stop offset="1" stop-color="#7f98c8"/></linearGradient>
<linearGradient id="redc" x1="0" y1="0" x2="0" y2="1"><stop offset="0" stop-color="#ff9090"/><stop offset="0.5" stop-color="#ff1818"/><stop offset="1" stop-color="#ff7070"/></linearGradient>
<linearGradient id="prn" x1="0" y1="0" x2="0" y2="1"><stop offset="0" stop-color="#f2f2f2"/><stop offset="1" stop-color="#7c7c7c"/></linearGradient>
<linearGradient id="ppr" x1="0" y1="0" x2="1" y2="1"><stop offset="0" stop-color="#8fd0ff"/><stop offset="1" stop-color="#3f8fe0"/></linearGradient>
</defs>
<g stroke="#a4a4a4" stroke-width="1.2">
<path d="M497,295.3 V317 M610.3,295.3 V317 M669.8,295.3 V317 M756.4,295.3 V317 M815.8,295.3 V317 M849.2,295.3 V317 M908.6,295.3 V317 M968.5,295.3 V317"/>
</g>
<!-- help -->
<circle cx="454.1" cy="305.6" r="9.6" fill="#e4e4e4" stroke="#d2d2d2" stroke-width="1"/>
<circle cx="454.1" cy="305.6" r="7.8" fill="url(#hlp)" stroke="#b4b4b4" stroke-width="0.8"/>
<text x="454.1" y="310.2" font-size="12.5" font-weight="bold" fill="#e9e9e9" text-anchor="middle" style="font-family:'Liberation Sans',sans-serif">?</text>
<!-- icon 2 -->
<rect x="472.4" y="296.4" width="16.6" height="18.8" rx="1.2" fill="#fbfbff" stroke="#4a66a6" stroke-width="1.1"/>
<rect x="473" y="297" width="15.4" height="3.4" fill="#e4304e"/>
<rect x="474" y="297.6" width="2.4" height="1.6" fill="#ffd0d8"/><rect x="478" y="297.6" width="8" height="1.4" fill="#ff9aa8"/>
<path d="M474.6,303.4 H480 M474.6,306 H479 M474.6,308.8 H480 M474.6,311.6 H481" stroke="#c08ab0" stroke-width="0.9"/>
<path d="M478.6,307.2 L484,302 L484,305 L487.4,305 L487.4,309.6 L484,309.6 L484,312.6 Z" fill="#4fa0e8" stroke="#2a60b0" stroke-width="0.8"/>
<!-- nav -->
<g fill="#d6d6d6" stroke="#c6c6c6" stroke-width="0.6">
<rect x="508" y="300.8" width="3" height="11"/><path d="M520.5,300.8 L511,306.3 L520.5,311.8 Z"/>
<path d="M540.4,300.8 L531.3,306.3 L540.4,311.8 Z M549,300.8 L539.9,306.3 L549,311.8 Z"/>
<path d="M559,300.8 L568.1,306.3 L559,311.8 Z M567.6,300.8 L576.6,306.3 L567.6,311.8 Z"/>
<path d="M587.7,300.8 L597,306.3 L587.7,311.8 Z"/><rect x="597" y="300.8" width="3" height="11"/>
</g>
<!-- pencil -->
<path d="M631.2,296.2 L634.9,298.7 L624.4,313.4 L620.4,315.4 L620.8,310.8 Z" fill="#dcdcdc" stroke="#c6c6c6" stroke-width="0.9"/><path d="M620.4,315.4 L620.7,312.6 L622.6,314.2 Z" fill="#b0b0b0"/>
<ellipse cx="626" cy="315.2" rx="4.5" ry="1" fill="#e2e2e2"/>
<!-- copy -->
<rect x="646.8" y="297.2" width="12.8" height="13.4" rx="1" fill="#5a90d8" stroke="#3a64b0" stroke-width="0.9"/>
<rect x="648" y="298.2" width="5" height="11" fill="#7ab0ea" opacity="0.8"/>
<rect x="650.4" y="300.6" width="12.4" height="13.2" rx="1.2" fill="#f8f8fa" stroke="#465480" stroke-width="1.1"/>
<path d="M652.6,304 H660.4 M652.6,306.4 H660.4 M652.6,308.8 H660.4 M652.6,311.2 H660.4" stroke="#b4b4b8" stroke-width="0.9"/>
<!-- binders -->
<g>
<rect x="677.2" y="296.6" width="8.2" height="19" fill="url(#bnd)" stroke="#6a80b0" stroke-width="0.9"/>
<rect x="679.6" y="298.8" width="3.4" height="6.4" fill="#f4f6fc" stroke="#8a98b8" stroke-width="0.5"/>
<rect x="679.2" y="305.4" width="4.2" height="2.6" fill="#d8284a"/>
<circle cx="681.3" cy="311.8" r="1.5" fill="#fff" stroke="#333" stroke-width="0.9"/>
<rect x="687.4" y="296.6" width="8.2" height="19" fill="url(#bnd)" stroke="#6a80b0" stroke-width="0.9"/>
<rect x="689.8" y="298.8" width="3.4" height="6.4" fill="#f4f6fc" stroke="#8a98b8" stroke-width="0.5"/>
<rect x="689.4" y="305.4" width="4.2" height="2.6" fill="#d8284a"/>
<circle cx="691.5" cy="311.8" r="1.5" fill="#fff" stroke="#333" stroke-width="0.9"/>
</g>
<!-- table plus -->
<rect x="705.6" y="298" width="17.2" height="17.6" rx="1" fill="#e8e8e8" stroke="#5f76a4" stroke-width="1.1"/>
<path d="M706,303.8 H722.4 M706,306.8 H722.4 M706,309.8 H722.4 M706,312.8 H722.4 M709.6,302 V315 M718.6,302 V315" stroke="#b8bcc4" stroke-width="0.8"/>
<rect x="712.6" y="301" width="3.2" height="14" fill="url(#redc)"/>
<rect x="716" y="299" width="5.8" height="2.2" fill="#7aa6e0" stroke="#3a68b8" stroke-width="0.6"/>
<path d="M707.4,296.4 H710.2 V299 H713 V301.8 H710.2 V304.4 H707.4 V301.8 H704.6 V299 H707.4 Z" fill="#6aa0f0" stroke="#2a5cb8" stroke-width="0.8"/>
<!-- clock -->
<path d="M738.8,296.4 H741.8 V298.4 H738.8 Z M733.4,299.6 l1.6,-1.4 l1.2,1.4 M747.2,299.6 l-1.6,-1.4 l-1.2,1.4" fill="#a8a8a8" stroke="#a0a0a0" stroke-width="0.8"/>
<circle cx="740.3" cy="306.6" r="8.3" fill="#f2f5fb" stroke="#a8a8a8" stroke-width="1.8"/>
<path d="M740.3,301.6 V306.8 L743.6,308.8" fill="none" stroke="#5a6ea8" stroke-width="1.5"/>
<!-- icon A -->
<rect x="764.4" y="297.4" width="17.2" height="18.2" fill="#e6e6e6" stroke="#6a7fa6" stroke-width="1.1"/>
<path d="M765,301 H781 M765,304.2 H781 M765,307.4 H781 M765,310.6 H781 M765,313.6 H781 M775,298 V315 M778.4,298 V315" stroke="#bcc0c8" stroke-width="0.7"/>
<rect x="768.4" y="298" width="3.2" height="17" fill="url(#redc)"/>
<path d="M773,305.4 L777.6,301 L777.6,303.6 L781.4,303.6 L781.4,307.4 L777.6,307.4 L777.6,310 Z" fill="#5a9cf0" stroke="#2a5cb8" stroke-width="0.7"/>
<!-- icon B -->
<rect x="792.2" y="297.4" width="17" height="18.2" fill="#e6e6e6" stroke="#6a7fa6" stroke-width="1.1"/>
<path d="M793,301 H809 M793,304.2 H809 M793,307.4 H809 M793,310.6 H809 M793,313.6 H809 M795.6,298 V315 M798.8,298 V315" stroke="#bcc0c8" stroke-width="0.7"/>
<rect x="801.8" y="298" width="3.2" height="17" fill="url(#redc)"/>
<path d="M801,305.4 L796.4,301 L796.4,303.6 L792.4,303.6 L792.4,307.4 L796.4,307.4 L796.4,310 Z" fill="#5a9cf0" stroke="#2a5cb8" stroke-width="0.7"/>
<!-- pause -->
<rect x="827.5" y="299.8" width="4.7" height="11.2" rx="0.8" fill="#5a88d8" stroke="#3a64b8" stroke-width="0.8"/>
<rect x="834.2" y="299.8" width="4.7" height="11.2" rx="0.8" fill="#5a88d8" stroke="#3a64b8" stroke-width="0.8"/>
<!-- printer -->
<rect x="861" y="297.2" width="10.8" height="9" fill="url(#ppr)" stroke="#3a78c8" stroke-width="0.8"/>
<path d="M859.4,304 H873.6 L875.6,307 V313 Q875.6,314.6 874,314.6 H859 Q857.4,314.6 857.4,313 V307 Z" fill="url(#prn)" stroke="#6e6e6e" stroke-width="0.9"/>
<rect x="859.6" y="307.8" width="13.8" height="2" fill="#30c030"/><rect x="859.6" y="306.8" width="13.8" height="1" fill="#f4fff4"/>
<rect x="870" y="311.4" width="1.8" height="1.4" fill="#e02020"/>
<!-- undo -->
<rect x="884.2" y="297.4" width="16.8" height="18.6" fill="#e4e6ea" stroke="#5f76a4" stroke-width="1.2"/>
<path d="M885,304 H900.4 M885,308 H900.4 M885,312 H900.4 M889,298 V315.6 M893,298 V315.6 M897,298 V315.6" stroke="#b4b8c2" stroke-width="0.7"/>
<path d="M883,302 L889.6,296.4 L889.6,299.6 Q897.6,299.6 897.6,306.2 Q897.6,310 893.4,311.2 Q895,308.6 893.6,306.4 Q892.4,304.6 889.6,304.6 L889.6,307.8 Z" fill="#48b028" stroke="#2a7a18" stroke-width="0.8"/>
<!-- brackets -->
<g fill="none" stroke="#c4c4c4" stroke-width="2">
<path d="M923,298.8 H919.2 V312.4 H923 M929,298.8 H932.8 V312.4 H929"/>
<path d="M917,306 H919 M933,306 H935" stroke-width="1"/>
<path d="M923,302 L928.6,306.4" stroke-width="1.2"/>
</g>
<rect x="922.2" y="301.2" width="2.2" height="2.2" fill="#c8c8c8"/><rect x="927.4" y="305.2" width="2.4" height="2.4" fill="#c8c8c8"/>
<!-- integral -->
<g fill="none" stroke="#cfcfcf" stroke-width="1.2">
<path d="M952.6,298.6 Q950.2,298 950,300.6 L949.4,309.8 Q949.2,312.6 946.4,312"/>
<path d="M954.6,302.2 H953 V310 H954.6 M958.4,302.2 H960 V310 H958.4"/>
<path d="M955,304.2 L958,308 M958,304.2 L955,308" stroke-width="0.9"/>
</g>
<!-- last -->
<rect x="977" y="297" width="16.4" height="18" rx="1" fill="#ececec" stroke="#d4d4d4" stroke-width="1"/>
<path d="M984,300.4 L988,296.6 L988,298.8 L992,298.8 L992,302 L988,302 L988,304.2 Z" fill="#dcdcdc" stroke="#cacaca" stroke-width="0.7"/>
<path d="M982.6,305 H990 M982.6,309 H990 M982.6,313 H990" stroke="#cccccc" stroke-width="1"/>
<g fill="#cccccc"><rect x="979.4" y="304.4" width="1.4" height="1.4"/><rect x="979.4" y="308.4" width="1.4" height="1.4"/><rect x="979.4" y="312.4" width="1.4" height="1.4"/></g>
</svg>
</div>
<div class="grid">
<div class="cl hd" style="left:0px;top:0.00px;width:38px;height:13.79px;"></div>
<div class="cl hd" style="left:38px;top:0.00px;width:123px;height:13.79px;">Ura in datum</div>
<div class="cl hd hc" style="left:161px;top:0.00px;width:41px;height:13.79px;">Teden</div>
<div class="cl hd" style="left:202px;top:0.00px;width:53.5px;height:13.79px;">FIQ101 <i></i>T</div>
<div class="cl hd" style="left:255.5px;top:0.00px;width:63.5px;height:13.79px;">FIQ101 L</div>
<div class="cl hd" style="left:319px;top:0.00px;width:54.5px;height:13.79px;">FIQ102 <i></i>T</div>
<div class="cl hd" style="left:373.5px;top:0.00px;width:63.5px;height:13.79px;">FIQ102 L</div>
<div class="cl hd" style="left:437px;top:0.00px;width:63.5px;height:13.79px;">Nivo vrtina</div>
<div class="cl hd" style="left:500.5px;top:0.00px;width:54.5px;height:13.79px;">Pretok T</div>
<div class="cl hd" style="left:555px;top:0.00px;width:54px;height:13.79px;">Pretok L</div>
<div class="cl rn" style="left:0px;top:13.79px;width:38px;height:13.79px;">93</div>
<div class="cl dt" style="left:38px;top:13.79px;width:123px;height:13.79px;">7/27/2025 11:59:41 PM</div>
<div class="cl c k" style="left:161px;top:13.79px;width:41px;height:13.79px;">30</div>
<div class="cl c r" style="left:202px;top:13.79px;width:53.5px;height:13.79px;">387.3</div>
<div class="cl c cy" style="left:255.5px;top:13.79px;width:63.5px;height:13.79px;">12695</div>
<div class="cl c b" style="left:319px;top:13.79px;width:54.5px;height:13.79px;">294.1</div>
<div class="cl l g" style="left:373.5px;top:13.79px;width:63.5px;height:13.79px;">10203</div>
<div class="cl l o" style="left:437px;top:13.79px;width:63.5px;height:13.79px;">39.61</div>
<div class="cl l y" style="left:500.5px;top:13.79px;width:54.5px;height:13.79px;">681.4</div>
<div class="cl l m" style="left:555px;top:13.79px;width:54px;height:13.79px;">22898.6</div>
<div class="cl rn" style="left:0px;top:27.59px;width:38px;height:13.79px;">94</div>
<div class="cl dt alt" style="left:38px;top:27.59px;width:123px;height:13.79px;">8/3/2025 11:59:41 PM</div>
<div class="cl c k alt" style="left:161px;top:27.59px;width:41px;height:13.79px;">31</div>
<div class="cl c r alt" style="left:202px;top:27.59px;width:53.5px;height:13.79px;">300.4</div>
<div class="cl c cy alt" style="left:255.5px;top:27.59px;width:63.5px;height:13.79px;">12995</div>
<div class="cl c b alt" style="left:319px;top:27.59px;width:54.5px;height:13.79px;">394.3</div>
<div class="cl l g alt" style="left:373.5px;top:27.59px;width:63.5px;height:13.79px;">10596</div>
<div class="cl l o alt" style="left:437px;top:27.59px;width:63.5px;height:13.79px;">37.67</div>
<div class="cl l y alt" style="left:500.5px;top:27.59px;width:54.5px;height:13.79px;">694.7</div>
<div class="cl l m alt" style="left:555px;top:27.59px;width:54px;height:13.79px;">23590.6</div>
<div class="cl rn" style="left:0px;top:41.38px;width:38px;height:13.79px;">95</div>
<div class="cl dt" style="left:38px;top:41.38px;width:123px;height:13.79px;">8/10/2025 11:59:41 PM</div>
<div class="cl c k" style="left:161px;top:41.38px;width:41px;height:13.79px;">32</div>
<div class="cl c r" style="left:202px;top:41.38px;width:53.5px;height:13.79px;">212.8</div>
<div class="cl c cy" style="left:255.5px;top:41.38px;width:63.5px;height:13.79px;">13207</div>
<div class="cl c b" style="left:319px;top:41.38px;width:54.5px;height:13.79px;">453.7</div>
<div class="cl l g" style="left:373.5px;top:41.38px;width:63.5px;height:13.79px;">11048</div>
<div class="cl l o" style="left:437px;top:41.38px;width:63.5px;height:13.79px;">47.53</div>
<div class="cl l y" style="left:500.5px;top:41.38px;width:54.5px;height:13.79px;">666.5</div>
<div class="cl l m" style="left:555px;top:41.38px;width:54px;height:13.79px;">24254.5</div>
<div class="cl rn" style="left:0px;top:55.18px;width:38px;height:13.79px;">96</div>
<div class="cl dt alt" style="left:38px;top:55.18px;width:123px;height:13.79px;">8/17/2025 11:59:41 PM</div>
<div class="cl c k alt" style="left:161px;top:55.18px;width:41px;height:13.79px;">33</div>
<div class="cl c r alt" style="left:202px;top:55.18px;width:53.5px;height:13.79px;">157.6</div>
<div class="cl c cy alt" style="left:255.5px;top:55.18px;width:63.5px;height:13.79px;">13364</div>
<div class="cl c b alt" style="left:319px;top:55.18px;width:54.5px;height:13.79px;">456.8</div>
<div class="cl l g alt" style="left:373.5px;top:55.18px;width:63.5px;height:13.79px;">11503</div>
<div class="cl l o alt" style="left:437px;top:55.18px;width:63.5px;height:13.79px;">48.21</div>
<div class="cl l y alt" style="left:500.5px;top:55.18px;width:54.5px;height:13.79px;">614.4</div>
<div class="cl l m alt" style="left:555px;top:55.18px;width:54px;height:13.79px;">24866.5</div>
<div class="cl rn" style="left:0px;top:68.97px;width:38px;height:13.79px;">97</div>
<div class="cl dt" style="left:38px;top:68.97px;width:123px;height:13.79px;">8/24/2025 11:59:40 PM</div>
<div class="cl c k" style="left:161px;top:68.97px;width:41px;height:13.79px;">34</div>
<div class="cl c r" style="left:202px;top:68.97px;width:53.5px;height:13.79px;">133.5</div>
<div class="cl c cy" style="left:255.5px;top:68.97px;width:63.5px;height:13.79px;">13497</div>
<div class="cl c b" style="left:319px;top:68.97px;width:54.5px;height:13.79px;">513.0</div>
<div class="cl l g" style="left:373.5px;top:68.97px;width:63.5px;height:13.79px;">12014</div>
<div class="cl l o" style="left:437px;top:68.97px;width:63.5px;height:13.79px;">49.72</div>
<div class="cl l y" style="left:500.5px;top:68.97px;width:54.5px;height:13.79px;">646.5</div>
<div class="cl l m" style="left:555px;top:68.97px;width:54px;height:13.79px;">25510.5</div>
<div class="cl rn" style="left:0px;top:82.77px;width:38px;height:13.79px;">98</div>
<div class="cl dt alt" style="left:38px;top:82.77px;width:123px;height:13.79px;">8/31/2025 11:59:40 PM</div>
<div class="cl c k alt" style="left:161px;top:82.77px;width:41px;height:13.79px;">35</div>
<div class="cl c r alt" style="left:202px;top:82.77px;width:53.5px;height:13.79px;">110.5</div>
<div class="cl c cy alt" style="left:255.5px;top:82.77px;width:63.5px;height:13.79px;">13607</div>
<div class="cl c b alt" style="left:319px;top:82.77px;width:54.5px;height:13.79px;">522.4</div>
<div class="cl l g alt" style="left:373.5px;top:82.77px;width:63.5px;height:13.79px;">12534</div>
<div class="cl l o alt" style="left:437px;top:82.77px;width:63.5px;height:13.79px;">49.70</div>
<div class="cl l y alt" style="left:500.5px;top:82.77px;width:54.5px;height:13.79px;">632.9</div>
<div class="cl l m alt" style="left:555px;top:82.77px;width:54px;height:13.79px;">26140.9</div>
<div class="cl rn" style="left:0px;top:96.56px;width:38px;height:13.79px;">99</div>
<div class="cl dt" style="left:38px;top:96.56px;width:123px;height:13.79px;">9/7/2025 11:59:40 PM</div>
<div class="cl c k" style="left:161px;top:96.56px;width:41px;height:13.79px;">36</div>
<div class="cl c r" style="left:202px;top:96.56px;width:53.5px;height:13.79px;">91.8</div>
<div class="cl c cy" style="left:255.5px;top:96.56px;width:63.5px;height:13.79px;">13698</div>
<div class="cl c b" style="left:319px;top:96.56px;width:54.5px;height:13.79px;">512.1</div>
<div class="cl l g" style="left:373.5px;top:96.56px;width:63.5px;height:13.79px;">13044</div>
<div class="cl l o" style="left:437px;top:96.56px;width:63.5px;height:13.79px;">38.11</div>
<div class="cl l y" style="left:500.5px;top:96.56px;width:54.5px;height:13.79px;">603.9</div>
<div class="cl l m" style="left:555px;top:96.56px;width:54px;height:13.79px;">26742.5</div>
<div class="cl rn" style="left:0px;top:110.36px;width:38px;height:13.79px;">100</div>
<div class="cl dt alt" style="left:38px;top:110.36px;width:123px;height:13.79px;">9/14/2025 11:59:41 PM</div>
<div class="cl c k alt" style="left:161px;top:110.36px;width:41px;height:13.79px;">37</div>
<div class="cl c r alt" style="left:202px;top:110.36px;width:53.5px;height:13.79px;">69.8</div>
<div class="cl c cy alt" style="left:255.5px;top:110.36px;width:63.5px;height:13.79px;">13768</div>
<div class="cl c b alt" style="left:319px;top:110.36px;width:54.5px;height:13.79px;">541.2</div>
<div class="cl l g alt" style="left:373.5px;top:110.36px;width:63.5px;height:13.79px;">13583</div>
<div class="cl l o alt" style="left:437px;top:110.36px;width:63.5px;height:13.79px;">39.61</div>
<div class="cl l y alt" style="left:500.5px;top:110.36px;width:54.5px;height:13.79px;">611.0</div>
<div class="cl l m alt" style="left:555px;top:110.36px;width:54px;height:13.79px;">27351.1</div>
<div class="cl rn" style="left:0px;top:124.16px;width:38px;height:13.79px;">101</div>
<div class="cl dt" style="left:38px;top:124.16px;width:123px;height:13.79px;">9/21/2025 11:59:40 PM</div>
<div class="cl c k" style="left:161px;top:124.16px;width:41px;height:13.79px;">38</div>
<div class="cl c r" style="left:202px;top:124.16px;width:53.5px;height:13.79px;">55.2</div>
<div class="cl c cy" style="left:255.5px;top:124.16px;width:63.5px;height:13.79px;">13823</div>
<div class="cl c b" style="left:319px;top:124.16px;width:54.5px;height:13.79px;">535.5</div>
<div class="cl l g" style="left:373.5px;top:124.16px;width:63.5px;height:13.79px;">14117</div>
<div class="cl l o" style="left:437px;top:124.16px;width:63.5px;height:13.79px;">41.11</div>
<div class="cl l y" style="left:500.5px;top:124.16px;width:54.5px;height:13.79px;">590.7</div>
<div class="cl l m" style="left:555px;top:124.16px;width:54px;height:13.79px;">27939.5</div>
<div class="cl rn" style="left:0px;top:137.95px;width:38px;height:13.79px;">102</div>
<div class="cl dt alt" style="left:38px;top:137.95px;width:123px;height:13.79px;">9/28/2025 11:59:40 PM</div>
<div class="cl c k alt" style="left:161px;top:137.95px;width:41px;height:13.79px;">39</div>
<div class="cl c r alt" style="left:202px;top:137.95px;width:53.5px;height:13.79px;">53.0</div>
<div class="cl c cy alt" style="left:255.5px;top:137.95px;width:63.5px;height:13.79px;">13875</div>
<div class="cl c b alt" style="left:319px;top:137.95px;width:54.5px;height:13.79px;">544.0</div>
<div class="cl l g alt" style="left:373.5px;top:137.95px;width:63.5px;height:13.79px;">14659</div>
<div class="cl l o alt" style="left:437px;top:137.95px;width:63.5px;height:13.79px;">39.74</div>
<div class="cl l y alt" style="left:500.5px;top:137.95px;width:54.5px;height:13.79px;">597.0</div>
<div class="cl l m alt" style="left:555px;top:137.95px;width:54px;height:13.79px;">28534.1</div>
<div class="cl rn" style="left:0px;top:151.75px;width:38px;height:13.79px;">103</div>
<div class="cl dt" style="left:38px;top:151.75px;width:123px;height:13.79px;">10/5/2025 11:59:40 PM</div>
<div class="cl c k" style="left:161px;top:151.75px;width:41px;height:13.79px;">40</div>
<div class="cl c r" style="left:202px;top:151.75px;width:53.5px;height:13.79px;">50.0</div>
<div class="cl c cy" style="left:255.5px;top:151.75px;width:63.5px;height:13.79px;">13925</div>
<div class="cl c b" style="left:319px;top:151.75px;width:54.5px;height:13.79px;">535.9</div>
<div class="cl l g" style="left:373.5px;top:151.75px;width:63.5px;height:13.79px;">15192</div>
<div class="cl l o" style="left:437px;top:151.75px;width:63.5px;height:13.79px;">37.87</div>
<div class="cl l y" style="left:500.5px;top:151.75px;width:54.5px;height:13.79px;">585.9</div>
<div class="cl l m" style="left:555px;top:151.75px;width:54px;height:13.79px;">29117.7</div>
<div class="cl rn" style="left:0px;top:165.54px;width:38px;height:13.79px;">104</div>
<div class="cl dt alt" style="left:38px;top:165.54px;width:123px;height:13.79px;">10/12/2025 11:59:40 PM</div>
<div class="cl c k alt" style="left:161px;top:165.54px;width:41px;height:13.79px;">41</div>
<div class="cl c r alt" style="left:202px;top:165.54px;width:53.5px;height:13.79px;">29.1</div>
<div class="cl c cy alt" style="left:255.5px;top:165.54px;width:63.5px;height:13.79px;">13954</div>
<div class="cl c b alt" style="left:319px;top:165.54px;width:54.5px;height:13.79px;">357.6</div>
<div class="cl l g alt" style="left:373.5px;top:165.54px;width:63.5px;height:13.79px;">15549</div>
<div class="cl l o alt" style="left:437px;top:165.54px;width:63.5px;height:13.79px;">100.00</div>
<div class="cl l y alt" style="left:500.5px;top:165.54px;width:54.5px;height:13.79px;">386.7</div>
<div class="cl l m alt" style="left:555px;top:165.54px;width:54px;height:13.79px;">29502.9</div>
<div class="cl rn" style="left:0px;top:179.34px;width:38px;height:13.79px;">105</div>
<div class="cl dt" style="left:38px;top:179.34px;width:123px;height:13.79px;">10/19/2025 11:59:40 PM</div>
<div class="cl c k" style="left:161px;top:179.34px;width:41px;height:13.79px;">42</div>
<div class="cl c r" style="left:202px;top:179.34px;width:53.5px;height:13.79px;">0.0</div>
<div class="cl c cy" style="left:255.5px;top:179.34px;width:63.5px;height:13.79px;">13954</div>
<div class="cl c b" style="left:319px;top:179.34px;width:54.5px;height:13.79px;">0.0</div>
<div class="cl l g" style="left:373.5px;top:179.34px;width:63.5px;height:13.79px;">15549</div>
<div class="cl l o" style="left:437px;top:179.34px;width:63.5px;height:13.79px;">100.00</div>
<div class="cl l y" style="left:500.5px;top:179.34px;width:54.5px;height:13.79px;">0.0</div>
<div class="cl l m" style="left:555px;top:179.34px;width:54px;height:13.79px;">29502.9</div>
<div class="cl rn" style="left:0px;top:193.13px;width:38px;height:13.79px;">106</div>
<div class="cl dt alt" style="left:38px;top:193.13px;width:123px;height:13.79px;">10/26/2025 11:59:40 PM</div>
<div class="cl c k alt" style="left:161px;top:193.13px;width:41px;height:13.79px;">43</div>
<div class="cl c r alt" style="left:202px;top:193.13px;width:53.5px;height:13.79px;">0.0</div>
<div class="cl c cy alt" style="left:255.5px;top:193.13px;width:63.5px;height:13.79px;">13954</div>
<div class="cl c b alt" style="left:319px;top:193.13px;width:54.5px;height:13.79px;">0.0</div>
<div class="cl l g alt" style="left:373.5px;top:193.13px;width:63.5px;height:13.79px;">15549</div>
<div class="cl l o alt" style="left:437px;top:193.13px;width:63.5px;height:13.79px;">13.33</div>
<div class="cl l y alt" style="left:500.5px;top:193.13px;width:54.5px;height:13.79px;">0.0</div>
<div class="cl l m alt" style="left:555px;top:193.13px;width:54px;height:13.79px;">29502.9</div>
<div class="cl rn" style="left:0px;top:206.93px;width:38px;height:13.79px;">107</div>
<div class="cl dt" style="left:38px;top:206.93px;width:123px;height:13.79px;">11/2/2025 11:59:40 PM</div>
<div class="cl c k" style="left:161px;top:206.93px;width:41px;height:13.79px;">44</div>
<div class="cl c r" style="left:202px;top:206.93px;width:53.5px;height:13.79px;">190.1</div>
<div class="cl c cy" style="left:255.5px;top:206.93px;width:63.5px;height:13.79px;">14144</div>
<div class="cl c b" style="left:319px;top:206.93px;width:54.5px;height:13.79px;">559.3</div>
<div class="cl l g" style="left:373.5px;top:206.93px;width:63.5px;height:13.79px;">16106</div>
<div class="cl l o" style="left:437px;top:206.93px;width:63.5px;height:13.79px;">37.64</div>
<div class="cl l y" style="left:500.5px;top:206.93px;width:54.5px;height:13.79px;">749.4</div>
<div class="cl l m" style="left:555px;top:206.93px;width:54px;height:13.79px;">30249.4</div>
<div class="cl rn" style="left:0px;top:220.72px;width:38px;height:13.79px;">108</div>
<div class="cl dt alt" style="left:38px;top:220.72px;width:123px;height:13.79px;">11/9/2025 11:59:40 PM</div>
<div class="cl c k alt" style="left:161px;top:220.72px;width:41px;height:13.79px;">45</div>
<div class="cl c r alt" style="left:202px;top:220.72px;width:53.5px;height:13.79px;">342.5</div>
<div class="cl c cy alt" style="left:255.5px;top:220.72px;width:63.5px;height:13.79px;">14485</div>
<div class="cl c b alt" style="left:319px;top:220.72px;width:54.5px;height:13.79px;">561.9</div>
<div class="cl l g alt" style="left:373.5px;top:220.72px;width:63.5px;height:13.79px;">16666</div>
<div class="cl l o alt" style="left:437px;top:220.72px;width:63.5px;height:13.79px;">51.33</div>
<div class="cl l y alt" style="left:500.5px;top:220.72px;width:54.5px;height:13.79px;">904.4</div>
<div class="cl l m alt" style="left:555px;top:220.72px;width:54px;height:13.79px;">31150.3</div>
<div class="cl rn" style="left:0px;top:234.51px;width:38px;height:13.79px;">109</div>
<div class="cl dt" style="left:38px;top:234.51px;width:123px;height:13.79px;">11/16/2025 11:59:41 PM</div>
<div class="cl c k" style="left:161px;top:234.51px;width:41px;height:13.79px;">46</div>
<div class="cl c r" style="left:202px;top:234.51px;width:53.5px;height:13.79px;">311.2</div>
<div class="cl c cy" style="left:255.5px;top:234.51px;width:63.5px;height:13.79px;">14795</div>
<div class="cl c b" style="left:319px;top:234.51px;width:54.5px;height:13.79px;">652.2</div>
<div class="cl l g" style="left:373.5px;top:234.51px;width:63.5px;height:13.79px;">17315</div>
<div class="cl l o" style="left:437px;top:234.51px;width:63.5px;height:13.79px;">52.47</div>
<div class="cl l y" style="left:500.5px;top:234.51px;width:54.5px;height:13.79px;">963.4</div>
<div class="cl l m" style="left:555px;top:234.51px;width:54px;height:13.79px;">32109.9</div>
<div class="cl rn" style="left:0px;top:248.31px;width:38px;height:13.79px;">110</div>
<div class="cl dt alt" style="left:38px;top:248.31px;width:123px;height:13.79px;">11/23/2025 11:59:41 PM</div>
<div class="cl c k alt" style="left:161px;top:248.31px;width:41px;height:13.79px;">50</div>
<div class="cl c r alt" style="left:202px;top:248.31px;width:53.5px;height:13.79px;">1.8</div>
<div class="cl c cy alt" style="left:255.5px;top:248.31px;width:63.5px;height:13.79px;">14797</div>
<div class="cl c b alt" style="left:319px;top:248.31px;width:54.5px;height:13.79px;">1.5</div>
<div class="cl l g alt" style="left:373.5px;top:248.31px;width:63.5px;height:13.79px;">17317</div>
<div class="cl l o alt" style="left:437px;top:248.31px;width:63.5px;height:13.79px;">0.00</div>
<div class="cl l y alt" style="left:500.5px;top:248.31px;width:54.5px;height:13.79px;">3.3</div>
<div class="cl l m alt" style="left:555px;top:248.31px;width:54px;height:13.79px;">32113.2</div>
<div class="cl rn" style="left:0px;top:262.11px;width:38px;height:13.79px;">111</div>
<div class="cl dt" style="left:38px;top:262.11px;width:123px;height:13.79px;">11/30/2025 11:59:40 PM</div>
<div class="cl c k" style="left:161px;top:262.11px;width:41px;height:13.79px;">51</div>
<div class="cl c r" style="left:202px;top:262.11px;width:53.5px;height:13.79px;">426.6</div>
<div class="cl c cy" style="left:255.5px;top:262.11px;width:63.5px;height:13.79px;">15221</div>
<div class="cl c b" style="left:319px;top:262.11px;width:54.5px;height:13.79px;">567.0</div>
<div class="cl l g" style="left:373.5px;top:262.11px;width:63.5px;height:13.79px;">17881</div>
<div class="cl l o" style="left:437px;top:262.11px;width:63.5px;height:13.79px;">52.02</div>
<div class="cl l y" style="left:500.5px;top:262.11px;width:54.5px;height:13.79px;">993.6</div>
<div class="cl l m" style="left:555px;top:262.11px;width:54px;height:13.79px;">33102.9</div>
<div class="cl rn" style="left:0px;top:275.90px;width:38px;height:13.79px;">112</div>
<div class="cl dt alt" style="left:38px;top:275.90px;width:123px;height:13.79px;">12/7/2025 11:59:42 PM</div>
<div class="cl c k alt" style="left:161px;top:275.90px;width:41px;height:13.79px;">52</div>
<div class="cl c r alt" style="left:202px;top:275.90px;width:53.5px;height:13.79px;">531.6</div>
<div class="cl c cy alt" style="left:255.5px;top:275.90px;width:63.5px;height:13.79px;">15751</div>
<div class="cl c b alt" style="left:319px;top:275.90px;width:54.5px;height:13.79px;">538.6</div>
<div class="cl l g alt" style="left:373.5px;top:275.90px;width:63.5px;height:13.79px;">18418</div>
<div class="cl l o alt" style="left:437px;top:275.90px;width:63.5px;height:13.79px;">38.06</div>
<div class="cl l y alt" style="left:500.5px;top:275.90px;width:54.5px;height:13.79px;">1070.2</div>
<div class="cl l m alt" style="left:555px;top:275.90px;width:54px;height:13.79px;">34169.0</div>
<div class="cl rn" style="left:0px;top:289.69px;width:38px;height:13.79px;">113</div>
<div class="cl dt" style="left:38px;top:289.69px;width:123px;height:13.79px;">12/14/2025 11:59:40 PM</div>
<div class="cl c k" style="left:161px;top:289.69px;width:41px;height:13.79px;">53</div>
<div class="cl c r" style="left:202px;top:289.69px;width:53.5px;height:13.79px;">527.8</div>
<div class="cl c cy" style="left:255.5px;top:289.69px;width:63.5px;height:13.79px;">16277</div>
<div class="cl c b" style="left:319px;top:289.69px;width:54.5px;height:13.79px;">547.9</div>
<div class="cl l g" style="left:373.5px;top:289.69px;width:63.5px;height:13.79px;">18964</div>
<div class="cl l o" style="left:437px;top:289.69px;width:63.5px;height:13.79px;">39.33</div>
<div class="cl l y" style="left:500.5px;top:289.69px;width:54.5px;height:13.79px;">1075.7</div>
<div class="cl l m" style="left:555px;top:289.69px;width:54px;height:13.79px;">35240.6</div>
<div class="cl rn" style="left:0px;top:303.49px;width:38px;height:13.79px;">114</div>
<div class="cl dt alt" style="left:38px;top:303.49px;width:123px;height:13.79px;">12/21/2025 11:59:41 PM</div>
<div class="cl c k alt" style="left:161px;top:303.49px;width:41px;height:13.79px;">54</div>
<div class="cl c r alt" style="left:202px;top:303.49px;width:53.5px;height:13.79px;">503.6</div>
<div class="cl c cy alt" style="left:255.5px;top:303.49px;width:63.5px;height:13.79px;">16778</div>
<div class="cl c b alt" style="left:319px;top:303.49px;width:54.5px;height:13.79px;">557.0</div>
<div class="cl l g alt" style="left:373.5px;top:303.49px;width:63.5px;height:13.79px;">19519</div>
<div class="cl l o alt" style="left:437px;top:303.49px;width:63.5px;height:13.79px;">47.44</div>
<div class="cl l y alt" style="left:500.5px;top:303.49px;width:54.5px;height:13.79px;">1060.6</div>
<div class="cl l m alt" style="left:555px;top:303.49px;width:54px;height:13.79px;">36297.1</div>
<div class="cl rn" style="left:0px;top:317.29px;width:38px;height:13.79px;">115</div>
<div class="cl dt" style="left:38px;top:317.29px;width:123px;height:13.79px;">12/28/2025 11:59:41 PM</div>
<div class="cl c k" style="left:161px;top:317.29px;width:41px;height:13.79px;">55</div>
<div class="cl c r" style="left:202px;top:317.29px;width:53.5px;height:13.79px;">325.8</div>
<div class="cl c cy" style="left:255.5px;top:317.29px;width:63.5px;height:13.79px;">17103</div>
<div class="cl c b" style="left:319px;top:317.29px;width:54.5px;height:13.79px;">417.6</div>
<div class="cl l g" style="left:373.5px;top:317.29px;width:63.5px;height:13.79px;">19935</div>
<div class="cl l o" style="left:437px;top:317.29px;width:63.5px;height:13.79px;">38.27</div>
<div class="cl l y" style="left:500.5px;top:317.29px;width:54.5px;height:13.79px;">743.4</div>
<div class="cl l m" style="left:555px;top:317.29px;width:54px;height:13.79px;">37037.6</div>
<div class="cl rn" style="left:0px;top:331.08px;width:38px;height:13.79px;">116</div>
<div class="cl dt alt" style="left:38px;top:331.08px;width:123px;height:13.79px;">1/4/2026 11:59:40 PM</div>
<div class="cl c k alt" style="left:161px;top:331.08px;width:41px;height:13.79px;">1</div>
<div class="cl c r alt" style="left:202px;top:331.08px;width:53.5px;height:13.79px;">304.9</div>
<div class="cl c cy alt" style="left:255.5px;top:331.08px;width:63.5px;height:13.79px;">104</div>
<div class="cl c b alt" style="left:319px;top:331.08px;width:54.5px;height:13.79px;">391.8</div>
<div class="cl l g alt" style="left:373.5px;top:331.08px;width:63.5px;height:13.79px;">194</div>
<div class="cl l o alt" style="left:437px;top:331.08px;width:63.5px;height:13.79px;">51.84</div>
<div class="cl l y alt" style="left:500.5px;top:331.08px;width:54.5px;height:13.79px;">696.7</div>
<div class="cl l m alt" style="left:555px;top:331.08px;width:54px;height:13.79px;">298.2</div>
<div class="cl rn" style="left:0px;top:344.88px;width:38px;height:13.79px;">117</div>
<div class="cl dt" style="left:38px;top:344.88px;width:123px;height:13.79px;">1/11/2026 11:59:40 PM</div>
<div class="cl c k" style="left:161px;top:344.88px;width:41px;height:13.79px;">2</div>
<div class="cl c r" style="left:202px;top:344.88px;width:53.5px;height:13.79px;">435.4</div>
<div class="cl c cy" style="left:255.5px;top:344.88px;width:63.5px;height:13.79px;">540</div>
<div class="cl c b" style="left:319px;top:344.88px;width:54.5px;height:13.79px;">468.7</div>
<div class="cl l g" style="left:373.5px;top:344.88px;width:63.5px;height:13.79px;">663</div>
<div class="cl l o" style="left:437px;top:344.88px;width:63.5px;height:13.79px;">39.32</div>
<div class="cl l y" style="left:500.5px;top:344.88px;width:54.5px;height:13.79px;">904.1</div>
<div class="cl l m" style="left:555px;top:344.88px;width:54px;height:13.79px;">1202.3</div>
<div class="cl rn" style="left:0px;top:358.67px;width:38px;height:13.79px;">118</div>
<div class="cl dt alt" style="left:38px;top:358.67px;width:123px;height:13.79px;">1/18/2026 11:59:40 PM</div>
<div class="cl c k alt" style="left:161px;top:358.67px;width:41px;height:13.79px;">3</div>
<div class="cl c r alt" style="left:202px;top:358.67px;width:53.5px;height:13.79px;">399.1</div>
<div class="cl c cy alt" style="left:255.5px;top:358.67px;width:63.5px;height:13.79px;">939</div>
<div class="cl c b alt" style="left:319px;top:358.67px;width:54.5px;height:13.79px;">436.5</div>
<div class="cl l g alt" style="left:373.5px;top:358.67px;width:63.5px;height:13.79px;">1099</div>
<div class="cl l o alt" style="left:437px;top:358.67px;width:63.5px;height:13.79px;">49.54</div>
<div class="cl l y alt" style="left:500.5px;top:358.67px;width:54.5px;height:13.79px;">835.6</div>
<div class="cl l m alt" style="left:555px;top:358.67px;width:54px;height:13.79px;">2037.7</div>
<div class="cl rn" style="left:0px;top:372.46px;width:38px;height:13.79px;">119</div>
<div class="cl dt" style="left:38px;top:372.46px;width:123px;height:13.79px;">1/25/2026 11:59:40 PM</div>
<div class="cl c k" style="left:161px;top:372.46px;width:41px;height:13.79px;">4</div>
<div class="cl c r" style="left:202px;top:372.46px;width:53.5px;height:13.79px;">406.9</div>
<div class="cl c cy" style="left:255.5px;top:372.46px;width:63.5px;height:13.79px;">1346</div>
<div class="cl c b" style="left:319px;top:372.46px;width:54.5px;height:13.79px;">427.7</div>
<div class="cl l g" style="left:373.5px;top:372.46px;width:63.5px;height:13.79px;">1527</div>
<div class="cl l o" style="left:437px;top:372.46px;width:63.5px;height:13.79px;">51.58</div>
<div class="cl l y" style="left:500.5px;top:372.46px;width:54.5px;height:13.79px;">834.6</div>
<div class="cl l m" style="left:555px;top:372.46px;width:54px;height:13.79px;">2872.1</div>
<div class="cl rn sel" style="left:0px;top:386.26px;width:38px;height:13.79px;">120</div>
<div class="cl dt alt" style="left:38px;top:386.26px;width:123px;height:13.79px;">2/1/2026 11:59:40 PM</div>
<div class="cl c k alt" style="left:161px;top:386.26px;width:41px;height:13.79px;">5</div>
<div class="cl c r alt" style="left:202px;top:386.26px;width:53.5px;height:13.79px;">411.6</div>
<div class="cl c cy alt" style="left:255.5px;top:386.26px;width:63.5px;height:13.79px;">1757</div>
<div class="cl c b alt" style="left:319px;top:386.26px;width:54.5px;height:13.79px;">455.5</div>
<div class="cl l g alt" style="left:373.5px;top:386.26px;width:63.5px;height:13.79px;">1982</div>
<div class="cl l o alt" style="left:437px;top:386.26px;width:63.5px;height:13.79px;">35.08</div>
<div class="cl l y alt" style="left:500.5px;top:386.26px;width:54.5px;height:13.79px;">867.1</div>
<div class="cl l m alt" style="left:555px;top:386.26px;width:54px;height:13.79px;">3739.0</div>
</div>
<div style="position:absolute;left:0;top:431.6px;width:37.5px;height:2.6px;background:#ece9d8;border-right:1px solid #8c8874"></div>
<div id="sb"><span style="left:3.4px;letter-spacing:-0.35px">Ready</span><span style="left:419.6px">Row 120</span><span style="left:517px">8:54:24 AM</span>
<svg style="position:absolute;left:0;top:0" width="609" height="20"><path d="M471.5,2 V18 M513.5,2 V18 M581.5,2 V18" stroke="#dcdcdc"/><rect x="499" y="3.2" width="7" height="6" fill="#2a9a3a" stroke="#555" stroke-width="0.8"/><rect x="495" y="7.2" width="8" height="7" fill="#e8e8e8" stroke="#555" stroke-width="0.8"/><rect x="496.5" y="8.7" width="5" height="3.5" fill="#2a9a3a"/><g fill="#b4b4b4"><rect x="603" y="15" width="1.6" height="1.6"/><rect x="600" y="15" width="1.6" height="1.6"/><rect x="597" y="15" width="1.6" height="1.6"/><rect x="603" y="12" width="1.6" height="1.6"/><rect x="600" y="12" width="1.6" height="1.6"/><rect x="603" y="9" width="1.6" height="1.6"/></g></svg></div>
</div></div>
</body></html>
